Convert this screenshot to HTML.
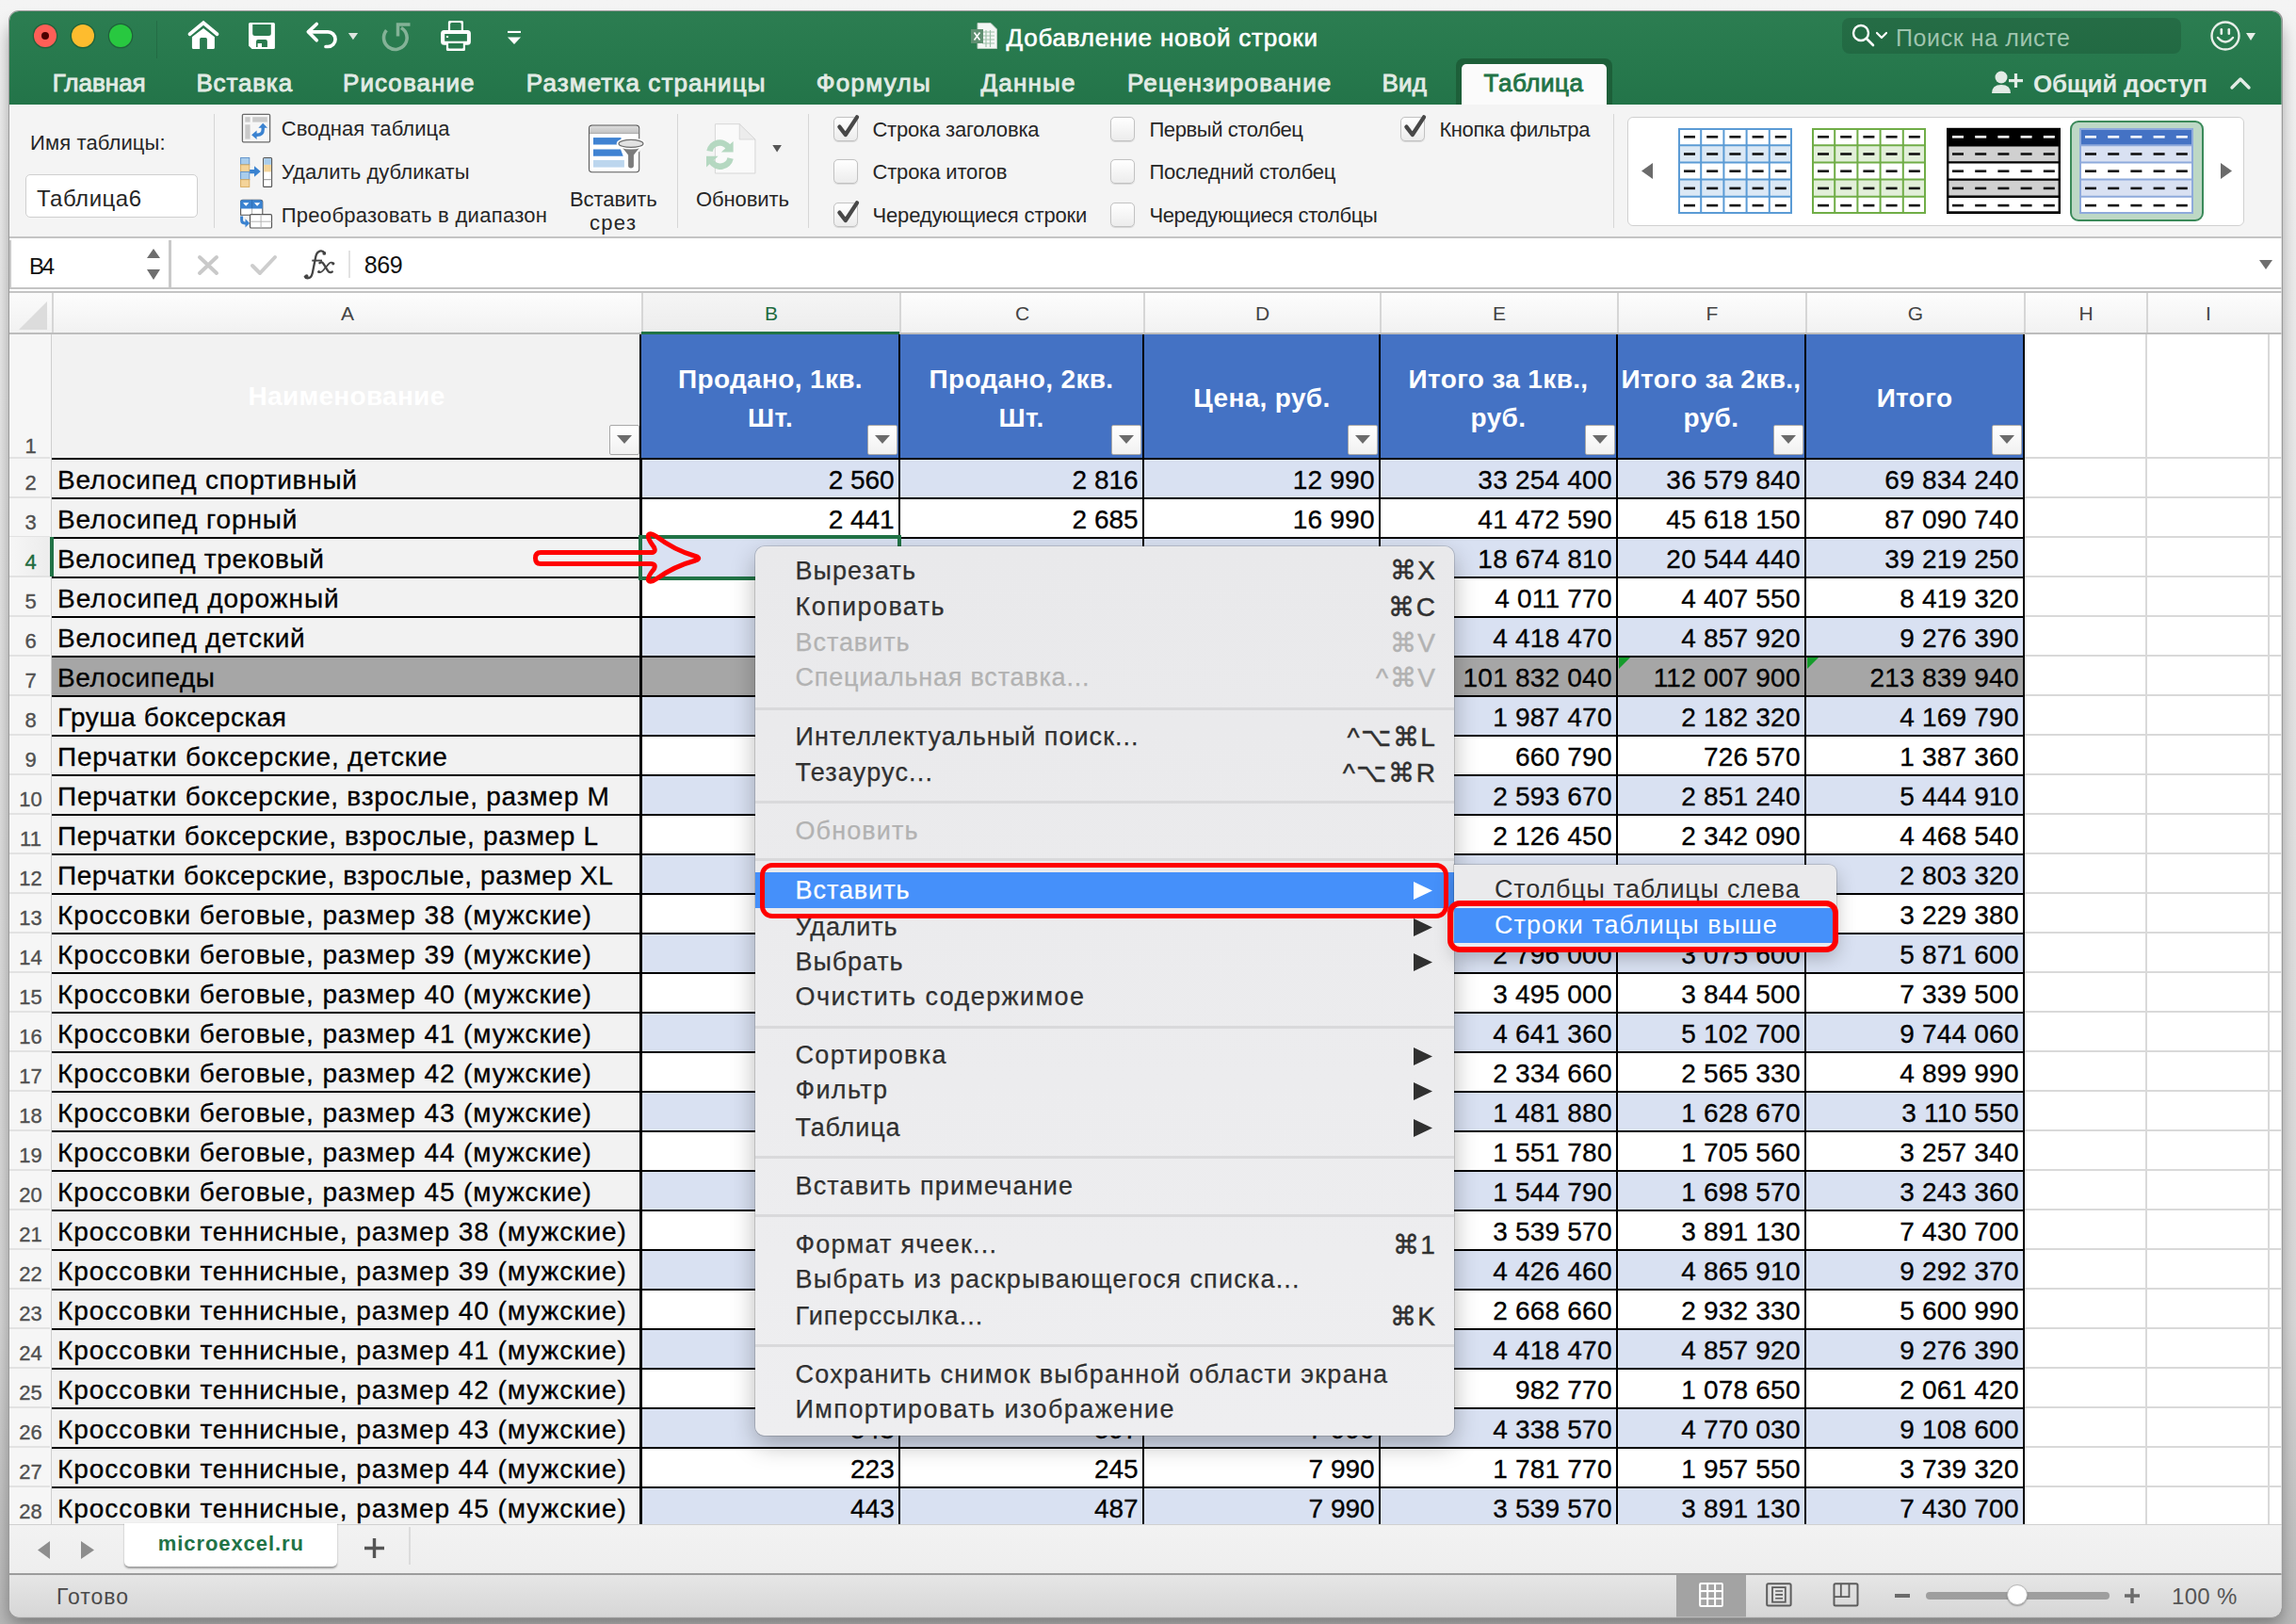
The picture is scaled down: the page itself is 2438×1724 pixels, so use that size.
<!DOCTYPE html><html><head><meta charset='utf-8'><style>
html,body{margin:0;padding:0;}
body{width:2438px;height:1724px;overflow:hidden;position:relative;background:#e4e4e4;font-family:"Liberation Sans",sans-serif;}
.t{position:absolute;white-space:nowrap;}
.b{position:absolute;box-sizing:border-box;}
svg{position:absolute;overflow:visible;}
#win{position:absolute;left:0;top:0;width:2438px;height:1724px;clip-path:inset(12px 15.5px 7.5px 10px round 10px);background:#f1f1f2;}
</style></head><body>

<div class='b' style='left:0;top:0;width:2438px;height:1724px;background:linear-gradient(#f4f4f4 0px,#ececec 300px,#d8d8d8 1400px,#b8b8b8 1724px);'></div>
<div class='b' style='left:10px;top:22px;width:2412px;height:1696px;border-radius:10px;box-shadow:0 6px 18px rgba(0,0,0,0.36);'></div>
<div class='b' style='left:9px;top:11px;width:2414.5px;height:1706.5px;border-radius:11px;background:#9a9a9a;'></div>
<div id='win'>
<div class='b' style='left:10px;top:12px;width:2413px;height:99px;background:linear-gradient(#2c7d51 0px,#287a4e 40px,#237449 99px);'></div>
<div class='b' style='left:36px;top:25.8px;width:24px;height:24px;border-radius:50%;background:#fe5f57;box-shadow:0 0 0 1.3px #1f623b;'></div>
<div class='b' style='left:75.7px;top:25.8px;width:24px;height:24px;border-radius:50%;background:#febc2e;box-shadow:0 0 0 1.3px #1f623b;'></div>
<div class='b' style='left:115.6px;top:25.8px;width:24px;height:24px;border-radius:50%;background:#28c840;box-shadow:0 0 0 1.3px #1f623b;'></div>
<div class='b' style='left:44px;top:33.8px;width:8px;height:8px;border-radius:50%;background:#4d0000;'></div>
<div class='b' style='left:166px;top:22px;width:1px;height:40px;background:rgba(0,0,0,0.12);'></div>
<svg style='left:195px;top:15px' width='105' height='45' viewBox='195 15 105 45'>
<path d='M201.5 36.2 L216 24.3 L230.5 36.2' fill='none' stroke='#ffffff' stroke-width='3.8' stroke-linecap='round' stroke-linejoin='miter'/>
<path d='M216 29.9 L227.9 39.2 V50.5 Q227.9 52 226.4 52 H219.9 V41.4 Q219.9 39.9 218.4 39.9 H213.6 Q212.1 39.9 212.1 41.4 V52 H205.4 Q203.9 52 203.9 50.5 V39.2 Z' fill='#ffffff'/>
<path d='M264 25.4 Q264 23.9 265.5 23.9 H290.4 Q291.9 23.9 291.9 25.4 V50.5 Q291.9 52 290.4 52 H267.5 L264 48.5 Z' fill='#ffffff'/>
<path d='M268.2 26 H287.8 V35.4 Q287.8 37.9 285.3 37.9 H270.7 Q268.2 37.9 268.2 35.4 Z' fill='#2a7b4f'/>
<path d='M272 50 V44 Q272 42 274 42 H281.9 Q283.9 42 283.9 44 V50 H278 V46.1 H273.6 V50 Z' fill='#297a4e'/>
</svg>
<svg style='left:320px;top:15px' width='240' height='45' viewBox='320 15 240 45'>
<path d='M336.2 25.5 L327.3 33.8 L336.2 42.7' fill='none' stroke='#ffffff' stroke-width='3.7' stroke-linecap='round' stroke-linejoin='round'/>
<path d='M328 33.8 H348.2 A7.85 7.85 0 0 1 348.2 49.5 H346' fill='none' stroke='#ffffff' stroke-width='3.7' stroke-linecap='round'/>
<path d='M369.9 35.1 H380.1 L374.9 42.2 Z' fill='#dde6e0'/>
<path d='M410.4 32.2 A12.3 12.3 0 1 0 425.95 29.45' fill='none' stroke='#84b297' stroke-width='3.6'/>
<path d='M435.5 26 H422.5 V38.5' fill='none' stroke='#84b297' stroke-width='3.5'/>
<path d='M475.9 32 V23.5 Q475.9 22 477.4 22 H490.5 Q492 22 492 23.5 V32 H489.8 V25.6 Q489.8 24.1 488.3 24.1 H479.6 Q478.1 24.1 478.1 25.6 V32 Z' fill='#ffffff'/>
<path fill-rule='evenodd' d='M471.6 32 H496.4 Q499.9 32 499.9 35.5 V44.2 Q499.9 47.7 496.4 47.7 H471.6 Q468.1 47.7 468.1 44.2 V35.5 Q468.1 32 471.6 32 Z M472.2 36.1 V43.7 H495.9 V36.1 Z' fill='#ffffff'/>
<rect x='473.9' y='38.1' width='2.2' height='1.9' fill='#ffffff'/>
<path d='M473.9 45.9 H494 V52.5 Q494 54 492.5 54 H475.4 Q473.9 54 473.9 52.5 Z' fill='#ffffff'/>
<path d='M476.1 46.1 H491.8 V50.6 Q491.8 51.6 490.8 51.6 H477.1 Q476.1 51.6 476.1 50.6 Z' fill='#277a4d'/>
<rect x='539' y='32.9' width='14' height='2.1' fill='#ffffff'/>
<path d='M539 39.4 H553 L546 47 Z' fill='#ffffff'/>
</svg>
<svg style='left:1031px;top:24px' width='28' height='28' viewBox='0 0 28 28'>
<path d='M7 0.5 H21 L27.5 7 V27.5 H7 Z' fill='#f4f7f5' stroke='#b9cbbf' stroke-width='1'/>
<path d='M12 10 H25 M12 14 H25 M12 18 H25 M12 22 H25 M16 8 V26 M20.5 8 V26' stroke='#9fc2ab' stroke-width='1.2'/>
<rect x='0' y='7' width='13' height='15' fill='#5f8f71'/>
<path d='M3.5 10.5 L9.5 18.5 M9.5 10.5 L3.5 18.5' stroke='#fff' stroke-width='1.6'/></svg>
<div class='t' style='left:1068.5px;top:27.4px;font-size:26px;line-height:26px;color:#ffffff;letter-spacing:0.806px;-webkit-text-stroke:0.6px #fff;'>Добавление новой строки</div>
<div class='b' style='left:1956px;top:19px;width:360px;height:38px;background:rgba(0,0,0,0.13);border-radius:8px;'></div>
<svg style='left:1966px;top:25px' width='40' height='26' viewBox='0 0 40 26'>
<circle cx='10' cy='10' r='8' fill='none' stroke='#fff' stroke-width='2.4'/>
<path d='M16 16 L23 23' stroke='#fff' stroke-width='2.6' stroke-linecap='round'/>
<path d='M27 10 L32 15 L37 10' fill='none' stroke='#fff' stroke-width='2.2' stroke-linecap='round' stroke-linejoin='round'/></svg>
<div class='t' style='left:2013.0px;top:27.6px;font-size:25px;line-height:25px;color:#9fc4ae;letter-spacing:0.6px;'>Поиск на листе</div>
<svg style='left:2347px;top:22px' width='60' height='34' viewBox='0 0 60 34'>
<circle cx='16' cy='16' r='14.5' fill='none' stroke='#e8efe9' stroke-width='2.4'/>
<rect x='10.5' y='8' width='2.6' height='7' rx='1.3' fill='#e8efe9'/>
<rect x='18.5' y='8' width='2.6' height='7' rx='1.3' fill='#e8efe9'/>
<path d='M8 18 Q16 27 24 18' fill='none' stroke='#e8efe9' stroke-width='2.4' stroke-linecap='round'/>
<path d='M38 13 H48 L43 21 Z' fill='#e8efe9'/></svg>
<div class='t' style='left:55.7px;top:74.9px;font-size:26px;line-height:26px;color:#e2ebe5;letter-spacing:0.008px;-webkit-text-stroke:0.9px #e2ebe5;'>Главная</div>
<div class='t' style='left:208.4px;top:74.9px;font-size:26px;line-height:26px;color:#e2ebe5;letter-spacing:0.846px;-webkit-text-stroke:0.9px #e2ebe5;'>Вставка</div>
<div class='t' style='left:364.0px;top:74.9px;font-size:26px;line-height:26px;color:#e2ebe5;letter-spacing:1.07px;-webkit-text-stroke:0.9px #e2ebe5;'>Рисование</div>
<div class='t' style='left:558.8px;top:74.9px;font-size:26px;line-height:26px;color:#e2ebe5;letter-spacing:1.104px;-webkit-text-stroke:0.9px #e2ebe5;'>Разметка страницы</div>
<div class='t' style='left:866.7px;top:74.9px;font-size:26px;line-height:26px;color:#e2ebe5;letter-spacing:1.312px;-webkit-text-stroke:0.9px #e2ebe5;'>Формулы</div>
<div class='t' style='left:1041.4px;top:74.9px;font-size:26px;line-height:26px;color:#e2ebe5;letter-spacing:1.216px;-webkit-text-stroke:0.9px #e2ebe5;'>Данные</div>
<div class='t' style='left:1196.9px;top:74.9px;font-size:26px;line-height:26px;color:#e2ebe5;letter-spacing:1.205px;-webkit-text-stroke:0.9px #e2ebe5;'>Рецензирование</div>
<div class='t' style='left:1467.4px;top:74.9px;font-size:26px;line-height:26px;color:#e2ebe5;letter-spacing:0.277px;-webkit-text-stroke:0.9px #e2ebe5;'>Вид</div>
<div class='b' style='left:1546px;top:62px;width:166px;height:52px;background:#1d5f39;border-radius:8px 8px 0 0;'></div>
<div class='b' style='left:1552px;top:68px;width:154px;height:46px;background:#fbfbfb;border-radius:5px 5px 0 0;'></div>
<div class='t' style='left:1575.6px;top:74.9px;font-size:26px;line-height:26px;color:#227346;letter-spacing:0.58px;-webkit-text-stroke:0.9px #227346;'>Таблица</div>
<svg style='left:2115px;top:75px' width='36' height='25' viewBox='0 0 36 25'>
<circle cx='10' cy='7' r='6.5' fill='#e2ebe5'/>
<path d='M0 24 Q0 15 10 15 Q20 15 20 24 Z' fill='#e2ebe5'/>
<rect x='18' y='9' width='15' height='3.2' fill='#e2ebe5'/><rect x='23.9' y='3' width='3.2' height='15' fill='#e2ebe5'/></svg>
<div class='t' style='left:2159.0px;top:75.9px;font-size:26px;line-height:26px;color:#e2ebe5;font-weight:700;letter-spacing:-0.22px;'>Общий доступ</div>
<svg style='left:2368px;top:81px' width='22' height='14' viewBox='0 0 22 14'><path d='M2 12 L11 3 L20 12' fill='none' stroke='#e2ebe5' stroke-width='3.4' stroke-linecap='round' stroke-linejoin='round'/></svg>
<div class='b' style='left:10px;top:111px;width:2413px;height:142px;background:#f4f4f4;border-bottom:2px solid #c4c4c4;'></div>
<div class='t' style='left:32.0px;top:140.9px;font-size:22px;line-height:22px;color:#262626;letter-spacing:0.12px;'>Имя таблицы:</div>
<div class='b' style='left:27px;top:185px;width:183px;height:46px;background:#fff;border:1.5px solid #cfcfcf;border-radius:5px;'></div>
<div class='t' style='left:39.0px;top:199.2px;font-size:24px;line-height:24px;color:#262626;letter-spacing:0.509px;'>Таблица6</div>
<div class='b' style='left:226.5px;top:121px;width:1.0px;height:121px;background:#d6d6d6;'></div>
<div class='t' style='left:298.7px;top:126.4px;font-size:22px;line-height:22px;color:#262626;letter-spacing:0.059px;'>Сводная таблица</div>
<div class='t' style='left:298.7px;top:172.4px;font-size:22px;line-height:22px;color:#262626;letter-spacing:0.074px;'>Удалить дубликаты</div>
<div class='t' style='left:298.7px;top:218.0px;font-size:22px;line-height:22px;color:#262626;letter-spacing:0.294px;'>Преобразовать в диапазон</div>
<svg style='left:248px;top:115px' width='50' height='135' viewBox='248 115 50 135'>
<rect x='257.4' y='121.4' width='29.2' height='29.4' rx='1.2' fill='#f6f6f6' stroke='#6a6a6a' stroke-width='1.3'/>
<rect x='260.3' y='124.2' width='5.3' height='5.4' fill='#c9c9c9'/>
<rect x='268.2' y='124.2' width='15.6' height='5.4' fill='#c9c9c9'/>
<rect x='260.3' y='132.3' width='5.3' height='15.3' fill='#c9c9c9'/>
<path d='M271 143.3 H273 Q279.2 143.3 279.2 137.5 V135' fill='none' stroke='#3a82d0' stroke-width='3.4'/>
<path d='M267.1 143.3 L272.6 138.5 V148 Z M279.2 130.8 L274.4 135.8 H284 Z' fill='#3a82d0'/>
<rect x='255.6' y='167.5' width='9.2' height='7.4' fill='#a9cdec' stroke='#5b8fc9' stroke-width='0.9'/>
<rect x='255.6' y='174.9' width='9.2' height='7.5' fill='#f4d49a' stroke='#d6a85a' stroke-width='0.9'/>
<rect x='255.6' y='182.4' width='9.2' height='8.3' fill='#a9cdec' stroke='#5b8fc9' stroke-width='0.9'/>
<rect x='255.6' y='190.7' width='9.2' height='7.7' fill='#f4d49a' stroke='#d6a85a' stroke-width='0.9'/>
<rect x='279.6' y='167.6' width='9' height='30.8' rx='1' fill='#fff' stroke='#555' stroke-width='1.1'/>
<rect x='280.2' y='168.2' width='7.8' height='6.7' fill='#a9cdec'/>
<rect x='280.2' y='174.9' width='7.8' height='7.5' fill='#f4d49a'/>
<path d='M279.6 190.7 H288.6' stroke='#888' stroke-width='0.9'/>
<path d='M265.1 182.1 H271' stroke='#3a82d0' stroke-width='4.2'/>
<path d='M270 176.2 L276.7 182 L270 187.8 Z' fill='#3a82d0'/>
<path d='M255.6 228.2 V214.5 Q255.6 212.2 257.9 212.2 H276.5 Q278.8 212.2 278.8 214.5 V228.2 Z' fill='#fff' stroke='#555' stroke-width='1.1'/>
<path d='M255.1 221.5 V214.5 Q255.1 212.2 257.4 212.2 H276.5 Q278.8 212.2 278.8 214.5 V221.5 Z' fill='#3a82d0'/>
<path d='M267.6 212.2 V221.5' stroke='#2a68b0' stroke-width='0.8'/><path d='M267.6 221.5 V228.2' stroke='#999' stroke-width='0.8'/>
<path d='M258 215.3 H264.4 L261.2 218.8 Z M269.9 215.3 H276.3 L273.1 218.8 Z' fill='#fff'/>
<rect x='265.5' y='227.6' width='23' height='14.4' rx='1.3' fill='#fff' stroke='#555' stroke-width='1.2'/>
<path d='M265.5 235.2 H288.5 M277.1 227.6 V242' stroke='#b5b5b5' stroke-width='1'/>
<path d='M256.6 229.6 V233.5 Q256.6 236.9 260 236.9 H261.5' fill='none' stroke='#3a82d0' stroke-width='3'/>
<path d='M265.1 236.9 L260.5 232.3 V241.5 Z' fill='#3a82d0'/>
</svg>
<svg style='left:600px;top:115px' width='260' height='135' viewBox='600 115 260 135'>
<defs><linearGradient id='slg' x1='0' x2='0' y1='0' y2='1'><stop offset='0' stop-color='#dcdcdc'/><stop offset='1' stop-color='#c2c2c2'/></linearGradient></defs>
<rect x='625.5' y='133.1' width='53.2' height='49.6' rx='3.2' fill='#fff' stroke='#5a5a5a' stroke-width='1.1'/>
<path d='M626.1 141.6 V136.3 Q626.1 133.7 628.7 133.7 H675.5 Q678.1 133.7 678.1 136.3 V141.6 Z' fill='url(#slg)'/>
<path d='M626 141.6 H678.2' stroke='#9a9a9a' stroke-width='0.8'/>
<rect x='630' y='146.1' width='29.5' height='7.4' fill='#3f82d2'/>
<path d='M630 158.6 H659 L661.7 165.7 H630 Z' fill='#3f82d2'/>
<rect x='630' y='169.9' width='32.9' height='7.7' fill='#bcd6ee'/>
<path d='M656 152.4 L666 165 V176 Q666 179.5 670 179.5 Q674 179.5 674 176 V165 L684 152.4 Z' fill='#7b7b7b' stroke='#fff' stroke-width='2.2' stroke-linejoin='round'/>
<ellipse cx='670' cy='152.4' rx='14.2' ry='5' fill='#e6e6e6' stroke='#fff' stroke-width='2.2'/>
<ellipse cx='670' cy='152.4' rx='13' ry='4' fill='#e2e2e2' stroke='#6e6e6e' stroke-width='1.2'/>
</svg>
<div class='t' style='left:605.0px;top:201.4px;font-size:22px;line-height:22px;color:#262626;letter-spacing:-0.067px;'>Вставить</div>
<div class='t' style='left:626.0px;top:225.9px;font-size:22px;line-height:22px;color:#262626;letter-spacing:1.307px;'>срез</div>
<div class='b' style='left:718.5px;top:121px;width:1.0px;height:121px;background:#d6d6d6;'></div>
<svg style='left:740px;top:125px' width='100' height='65' viewBox='740 125 100 65'>
<path d='M759.4 131.7 H785.2 L801.9 148 V184 H759.4 Z' fill='#fafafa' stroke='#d6d6d6' stroke-width='1'/>
<path d='M785.2 131.7 V148 H801.9 Z' fill='#ececec' stroke='#d6d6d6' stroke-width='0.8'/>
<path d='M753.5 160.5 A11 11 0 0 1 773.5 156.5' fill='none' stroke='#b5d8c1' stroke-width='6.5'/>
<path d='M778.6 149.9 V161.6 H765.8 Z' fill='#b5d8c1'/>
<path d='M775.6 168 A11 11 0 0 1 755.5 171.5' fill='none' stroke='#b5d8c1' stroke-width='6.5'/>
<path d='M750 177.5 V165.8 H762.6 Z' fill='#b5d8c1'/>
<path d='M820.3 154.1 H829.9 L825.1 161.4 Z' fill='#555'/>
</svg>
<div class='t' style='left:739.0px;top:201.4px;font-size:22px;line-height:22px;color:#262626;letter-spacing:-0.089px;'>Обновить</div>
<div class='b' style='left:858px;top:121px;width:1px;height:121px;background:#d6d6d6;'></div>
<div class='b' style='left:885px;top:123.6px;width:26px;height:26.0px;background:linear-gradient(#ffffff,#ececec);border:1.3px solid #c2c2c2;border-radius:5px;box-shadow:0 0.8px 0.8px rgba(0,0,0,0.12);'></div>
<svg style='left:886px;top:120.6px' width='28' height='28' viewBox='0 0 28 28'><path d='M5.4 13.6 L11.8 22 L24 3.3' fill='none' stroke='#484848' stroke-width='4.3' stroke-linecap='round' stroke-linejoin='round'/></svg>
<div class='t' style='left:926.4px;top:127.0px;font-size:22px;line-height:22px;color:#262626;letter-spacing:-0.178px;'>Строка заголовка</div>
<div class='b' style='left:885px;top:168.7px;width:26px;height:26.0px;background:linear-gradient(#ffffff,#ececec);border:1.3px solid #c2c2c2;border-radius:5px;box-shadow:0 0.8px 0.8px rgba(0,0,0,0.12);'></div>
<div class='t' style='left:926.4px;top:172.1px;font-size:22px;line-height:22px;color:#262626;letter-spacing:-0.143px;'>Строка итогов</div>
<div class='b' style='left:885px;top:214.5px;width:26px;height:26.0px;background:linear-gradient(#ffffff,#ececec);border:1.3px solid #c2c2c2;border-radius:5px;box-shadow:0 0.8px 0.8px rgba(0,0,0,0.12);'></div>
<svg style='left:886px;top:211.5px' width='28' height='28' viewBox='0 0 28 28'><path d='M5.4 13.6 L11.8 22 L24 3.3' fill='none' stroke='#484848' stroke-width='4.3' stroke-linecap='round' stroke-linejoin='round'/></svg>
<div class='t' style='left:926.4px;top:217.9px;font-size:22px;line-height:22px;color:#262626;letter-spacing:-0.129px;'>Чередующиеся строки</div>
<div class='b' style='left:1179px;top:123.6px;width:26px;height:26.0px;background:linear-gradient(#ffffff,#ececec);border:1.3px solid #c2c2c2;border-radius:5px;box-shadow:0 0.8px 0.8px rgba(0,0,0,0.12);'></div>
<div class='t' style='left:1220.4px;top:127.0px;font-size:22px;line-height:22px;color:#262626;letter-spacing:-0.406px;'>Первый столбец</div>
<div class='b' style='left:1179px;top:168.7px;width:26px;height:26.0px;background:linear-gradient(#ffffff,#ececec);border:1.3px solid #c2c2c2;border-radius:5px;box-shadow:0 0.8px 0.8px rgba(0,0,0,0.12);'></div>
<div class='t' style='left:1220.4px;top:172.1px;font-size:22px;line-height:22px;color:#262626;letter-spacing:-0.246px;'>Последний столбец</div>
<div class='b' style='left:1179px;top:214.5px;width:26px;height:26.0px;background:linear-gradient(#ffffff,#ececec);border:1.3px solid #c2c2c2;border-radius:5px;box-shadow:0 0.8px 0.8px rgba(0,0,0,0.12);'></div>
<div class='t' style='left:1220.4px;top:217.9px;font-size:22px;line-height:22px;color:#262626;letter-spacing:-0.367px;'>Чередующиеся столбцы</div>
<div class='b' style='left:1487px;top:123.6px;width:26px;height:26.0px;background:linear-gradient(#ffffff,#ececec);border:1.3px solid #c2c2c2;border-radius:5px;box-shadow:0 0.8px 0.8px rgba(0,0,0,0.12);'></div>
<svg style='left:1488px;top:120.6px' width='28' height='28' viewBox='0 0 28 28'><path d='M5.4 13.6 L11.8 22 L24 3.3' fill='none' stroke='#484848' stroke-width='4.3' stroke-linecap='round' stroke-linejoin='round'/></svg>
<div class='t' style='left:1528.4px;top:127.0px;font-size:22px;line-height:22px;color:#262626;letter-spacing:-0.392px;'>Кнопка фильтра</div>
<div class='b' style='left:1712.5px;top:121px;width:1.0px;height:121px;background:#d6d6d6;'></div>
<div class='b' style='left:1728px;top:124px;width:655px;height:116px;background:#fff;border:1.5px solid #d0d0d0;border-radius:6px;'></div>
<svg style='left:1743px;top:173px' width='12' height='17' viewBox='0 0 12 17'><path d='M12 0 V17 L0 8.5 Z' fill='#6b6b6b'/></svg>
<svg style='left:2358px;top:173px' width='12' height='17' viewBox='0 0 12 17'><path d='M0 0 V17 L12 8.5 Z' fill='#6b6b6b'/></svg>
<svg style='left:1782px;top:136px' width='121' height='91' viewBox='0 0 121 91'><rect x='0' y='0.0' width='121' height='18.2' fill='#fff'/><rect x='0' y='18.2' width='121' height='18.2' fill='#dbe8f5'/><rect x='0' y='36.4' width='121' height='18.2' fill='#fff'/><rect x='0' y='54.599999999999994' width='121' height='18.2' fill='#dbe8f5'/><rect x='0' y='72.8' width='121' height='18.2' fill='#fff'/><line x1='0' x2='121' y1='1' y2='1' stroke='#5b9bd5' stroke-width='2'/><line x1='0' x2='121' y1='18.2' y2='18.2' stroke='#5b9bd5' stroke-width='2'/><line x1='0' x2='121' y1='36.4' y2='36.4' stroke='#5b9bd5' stroke-width='2'/><line x1='0' x2='121' y1='54.599999999999994' y2='54.599999999999994' stroke='#5b9bd5' stroke-width='2'/><line x1='0' x2='121' y1='72.8' y2='72.8' stroke='#5b9bd5' stroke-width='2'/><line x1='0' x2='121' y1='90' y2='90' stroke='#5b9bd5' stroke-width='2'/><line y1='0' y2='91' x1='1' x2='1' stroke='#5b9bd5' stroke-width='2'/><line y1='0' y2='91' x1='24.2' x2='24.2' stroke='#5b9bd5' stroke-width='2'/><line y1='0' y2='91' x1='48.4' x2='48.4' stroke='#5b9bd5' stroke-width='2'/><line y1='0' y2='91' x1='72.6' x2='72.6' stroke='#5b9bd5' stroke-width='2'/><line y1='0' y2='91' x1='96.8' x2='96.8' stroke='#5b9bd5' stroke-width='2'/><line y1='0' y2='91' x1='120' x2='120' stroke='#5b9bd5' stroke-width='2'/><rect x='6.0' y='8.0' width='12' height='2.6' fill='#111'/><rect x='30.2' y='8.0' width='12' height='2.6' fill='#111'/><rect x='54.4' y='8.0' width='12' height='2.6' fill='#111'/><rect x='78.6' y='8.0' width='12' height='2.6' fill='#111'/><rect x='102.8' y='8.0' width='12' height='2.6' fill='#111'/><rect x='6.0' y='26.2' width='12' height='2.6' fill='#111'/><rect x='30.2' y='26.2' width='12' height='2.6' fill='#111'/><rect x='54.4' y='26.2' width='12' height='2.6' fill='#111'/><rect x='78.6' y='26.2' width='12' height='2.6' fill='#111'/><rect x='102.8' y='26.2' width='12' height='2.6' fill='#111'/><rect x='6.0' y='44.4' width='12' height='2.6' fill='#111'/><rect x='30.2' y='44.4' width='12' height='2.6' fill='#111'/><rect x='54.4' y='44.4' width='12' height='2.6' fill='#111'/><rect x='78.6' y='44.4' width='12' height='2.6' fill='#111'/><rect x='102.8' y='44.4' width='12' height='2.6' fill='#111'/><rect x='6.0' y='62.599999999999994' width='12' height='2.6' fill='#111'/><rect x='30.2' y='62.599999999999994' width='12' height='2.6' fill='#111'/><rect x='54.4' y='62.599999999999994' width='12' height='2.6' fill='#111'/><rect x='78.6' y='62.599999999999994' width='12' height='2.6' fill='#111'/><rect x='102.8' y='62.599999999999994' width='12' height='2.6' fill='#111'/><rect x='6.0' y='80.8' width='12' height='2.6' fill='#111'/><rect x='30.2' y='80.8' width='12' height='2.6' fill='#111'/><rect x='54.4' y='80.8' width='12' height='2.6' fill='#111'/><rect x='78.6' y='80.8' width='12' height='2.6' fill='#111'/><rect x='102.8' y='80.8' width='12' height='2.6' fill='#111'/></svg>
<svg style='left:1924px;top:136px' width='121' height='91' viewBox='0 0 121 91'><rect x='0' y='0.0' width='121' height='18.2' fill='#fff'/><rect x='0' y='18.2' width='121' height='18.2' fill='#e2efd9'/><rect x='0' y='36.4' width='121' height='18.2' fill='#fff'/><rect x='0' y='54.599999999999994' width='121' height='18.2' fill='#e2efd9'/><rect x='0' y='72.8' width='121' height='18.2' fill='#fff'/><line x1='0' x2='121' y1='1' y2='1' stroke='#70ad47' stroke-width='2'/><line x1='0' x2='121' y1='18.2' y2='18.2' stroke='#70ad47' stroke-width='2'/><line x1='0' x2='121' y1='36.4' y2='36.4' stroke='#70ad47' stroke-width='2'/><line x1='0' x2='121' y1='54.599999999999994' y2='54.599999999999994' stroke='#70ad47' stroke-width='2'/><line x1='0' x2='121' y1='72.8' y2='72.8' stroke='#70ad47' stroke-width='2'/><line x1='0' x2='121' y1='90' y2='90' stroke='#70ad47' stroke-width='2'/><line y1='0' y2='91' x1='1' x2='1' stroke='#70ad47' stroke-width='2'/><line y1='0' y2='91' x1='24.2' x2='24.2' stroke='#70ad47' stroke-width='2'/><line y1='0' y2='91' x1='48.4' x2='48.4' stroke='#70ad47' stroke-width='2'/><line y1='0' y2='91' x1='72.6' x2='72.6' stroke='#70ad47' stroke-width='2'/><line y1='0' y2='91' x1='96.8' x2='96.8' stroke='#70ad47' stroke-width='2'/><line y1='0' y2='91' x1='120' x2='120' stroke='#70ad47' stroke-width='2'/><rect x='6.0' y='8.0' width='12' height='2.6' fill='#111'/><rect x='30.2' y='8.0' width='12' height='2.6' fill='#111'/><rect x='54.4' y='8.0' width='12' height='2.6' fill='#111'/><rect x='78.6' y='8.0' width='12' height='2.6' fill='#111'/><rect x='102.8' y='8.0' width='12' height='2.6' fill='#111'/><rect x='6.0' y='26.2' width='12' height='2.6' fill='#111'/><rect x='30.2' y='26.2' width='12' height='2.6' fill='#111'/><rect x='54.4' y='26.2' width='12' height='2.6' fill='#111'/><rect x='78.6' y='26.2' width='12' height='2.6' fill='#111'/><rect x='102.8' y='26.2' width='12' height='2.6' fill='#111'/><rect x='6.0' y='44.4' width='12' height='2.6' fill='#111'/><rect x='30.2' y='44.4' width='12' height='2.6' fill='#111'/><rect x='54.4' y='44.4' width='12' height='2.6' fill='#111'/><rect x='78.6' y='44.4' width='12' height='2.6' fill='#111'/><rect x='102.8' y='44.4' width='12' height='2.6' fill='#111'/><rect x='6.0' y='62.599999999999994' width='12' height='2.6' fill='#111'/><rect x='30.2' y='62.599999999999994' width='12' height='2.6' fill='#111'/><rect x='54.4' y='62.599999999999994' width='12' height='2.6' fill='#111'/><rect x='78.6' y='62.599999999999994' width='12' height='2.6' fill='#111'/><rect x='102.8' y='62.599999999999994' width='12' height='2.6' fill='#111'/><rect x='6.0' y='80.8' width='12' height='2.6' fill='#111'/><rect x='30.2' y='80.8' width='12' height='2.6' fill='#111'/><rect x='54.4' y='80.8' width='12' height='2.6' fill='#111'/><rect x='78.6' y='80.8' width='12' height='2.6' fill='#111'/><rect x='102.8' y='80.8' width='12' height='2.6' fill='#111'/></svg>
<svg style='left:2067px;top:136px' width='121' height='91' viewBox='0 0 121 91'><rect x='0' y='0' width='121' height='18.2' fill='#000'/><rect x='0' y='18.2' width='121' height='18.2' fill='#d0d0d0'/><rect x='0' y='36.4' width='121' height='18.2' fill='#fff'/><rect x='0' y='54.599999999999994' width='121' height='18.2' fill='#d0d0d0'/><rect x='0' y='72.8' width='121' height='18.2' fill='#fff'/><line x1='0' x2='121' y1='18.2' y2='18.2' stroke='#000' stroke-width='2.4'/><line x1='0' x2='121' y1='36.4' y2='36.4' stroke='#000' stroke-width='2.4'/><line x1='0' x2='121' y1='54.599999999999994' y2='54.599999999999994' stroke='#000' stroke-width='2.4'/><line x1='0' x2='121' y1='72.8' y2='72.8' stroke='#000' stroke-width='2.4'/><line x1='0' x2='121' y1='89.8' y2='89.8' stroke='#000' stroke-width='2.4'/><rect x='1.2' y='1' width='118.6' height='88.8' fill='none' stroke='#000' stroke-width='2.4'/><rect x='6.0' y='8.0' width='12' height='2.6' fill='#fff'/><rect x='30.2' y='8.0' width='12' height='2.6' fill='#fff'/><rect x='54.4' y='8.0' width='12' height='2.6' fill='#fff'/><rect x='78.6' y='8.0' width='12' height='2.6' fill='#fff'/><rect x='102.8' y='8.0' width='12' height='2.6' fill='#fff'/><rect x='6.0' y='26.2' width='12' height='2.6' fill='#111'/><rect x='30.2' y='26.2' width='12' height='2.6' fill='#111'/><rect x='54.4' y='26.2' width='12' height='2.6' fill='#111'/><rect x='78.6' y='26.2' width='12' height='2.6' fill='#111'/><rect x='102.8' y='26.2' width='12' height='2.6' fill='#111'/><rect x='6.0' y='44.4' width='12' height='2.6' fill='#111'/><rect x='30.2' y='44.4' width='12' height='2.6' fill='#111'/><rect x='54.4' y='44.4' width='12' height='2.6' fill='#111'/><rect x='78.6' y='44.4' width='12' height='2.6' fill='#111'/><rect x='102.8' y='44.4' width='12' height='2.6' fill='#111'/><rect x='6.0' y='62.599999999999994' width='12' height='2.6' fill='#111'/><rect x='30.2' y='62.599999999999994' width='12' height='2.6' fill='#111'/><rect x='54.4' y='62.599999999999994' width='12' height='2.6' fill='#111'/><rect x='78.6' y='62.599999999999994' width='12' height='2.6' fill='#111'/><rect x='102.8' y='62.599999999999994' width='12' height='2.6' fill='#111'/><rect x='6.0' y='80.8' width='12' height='2.6' fill='#111'/><rect x='30.2' y='80.8' width='12' height='2.6' fill='#111'/><rect x='54.4' y='80.8' width='12' height='2.6' fill='#111'/><rect x='78.6' y='80.8' width='12' height='2.6' fill='#111'/><rect x='102.8' y='80.8' width='12' height='2.6' fill='#111'/></svg>
<div class='b' style='left:2198px;top:128px;width:142px;height:107px;background:#bdd8c5;border:2px solid #3b8a5a;border-radius:9px;'></div>
<svg style='left:2208px;top:136px' width='121' height='91' viewBox='0 0 121 91'><rect x='0' y='0' width='121' height='18.2' fill='#4472c4'/><rect x='0' y='18.2' width='121' height='18.2' fill='#d9e1f2'/><rect x='0' y='36.4' width='121' height='18.2' fill='#fff'/><rect x='0' y='54.599999999999994' width='121' height='18.2' fill='#d9e1f2'/><rect x='0' y='72.8' width='121' height='18.2' fill='#fff'/><line x1='0' x2='121' y1='18.2' y2='18.2' stroke='#8eaadb' stroke-width='2'/><line x1='0' x2='121' y1='36.4' y2='36.4' stroke='#8eaadb' stroke-width='2'/><line x1='0' x2='121' y1='54.599999999999994' y2='54.599999999999994' stroke='#8eaadb' stroke-width='2'/><line x1='0' x2='121' y1='72.8' y2='72.8' stroke='#8eaadb' stroke-width='2'/><rect x='1' y='1' width='119' height='89' fill='none' stroke='#8eaadb' stroke-width='2'/><rect x='6.0' y='8.0' width='12' height='2.6' fill='#fff'/><rect x='30.2' y='8.0' width='12' height='2.6' fill='#fff'/><rect x='54.4' y='8.0' width='12' height='2.6' fill='#fff'/><rect x='78.6' y='8.0' width='12' height='2.6' fill='#fff'/><rect x='102.8' y='8.0' width='12' height='2.6' fill='#fff'/><rect x='6.0' y='26.2' width='12' height='2.6' fill='#111'/><rect x='30.2' y='26.2' width='12' height='2.6' fill='#111'/><rect x='54.4' y='26.2' width='12' height='2.6' fill='#111'/><rect x='78.6' y='26.2' width='12' height='2.6' fill='#111'/><rect x='102.8' y='26.2' width='12' height='2.6' fill='#111'/><rect x='6.0' y='44.4' width='12' height='2.6' fill='#111'/><rect x='30.2' y='44.4' width='12' height='2.6' fill='#111'/><rect x='54.4' y='44.4' width='12' height='2.6' fill='#111'/><rect x='78.6' y='44.4' width='12' height='2.6' fill='#111'/><rect x='102.8' y='44.4' width='12' height='2.6' fill='#111'/><rect x='6.0' y='62.599999999999994' width='12' height='2.6' fill='#111'/><rect x='30.2' y='62.599999999999994' width='12' height='2.6' fill='#111'/><rect x='54.4' y='62.599999999999994' width='12' height='2.6' fill='#111'/><rect x='78.6' y='62.599999999999994' width='12' height='2.6' fill='#111'/><rect x='102.8' y='62.599999999999994' width='12' height='2.6' fill='#111'/><rect x='6.0' y='80.8' width='12' height='2.6' fill='#111'/><rect x='30.2' y='80.8' width='12' height='2.6' fill='#111'/><rect x='54.4' y='80.8' width='12' height='2.6' fill='#111'/><rect x='78.6' y='80.8' width='12' height='2.6' fill='#111'/><rect x='102.8' y='80.8' width='12' height='2.6' fill='#111'/></svg>
<div class='b' style='left:10px;top:253px;width:2413px;height:58px;background:#fff;'></div>
<div class='b' style='left:10px;top:255px;width:171.5px;height:50px;background:#fff;border-left:2px solid #c9c9c9;border-right:3px solid #c9c9c9;'></div>
<div class='t' style='left:31.0px;top:271.2px;font-size:24px;line-height:24px;color:#111;letter-spacing:-2.359px;'>B4</div>
<svg style='left:156px;top:264px' width='15' height='33' viewBox='0 0 15 33'><path d='M0 10 H14 L7 0 Z M0 22 H14 L7 33 Z' fill='#6e6e6e'/></svg>
<svg style='left:209px;top:270px' width='24' height='23' viewBox='0 0 24 23'><path d='M3 3 L21 20 M21 3 L3 20' stroke='#c9c9c9' stroke-width='4' stroke-linecap='round'/></svg>
<svg style='left:265px;top:270px' width='30' height='23' viewBox='0 0 30 23'><path d='M3 12 L11 20 L27 3' fill='none' stroke='#cdcdcd' stroke-width='4' stroke-linecap='round' stroke-linejoin='round'/></svg>
<svg style='left:318px;top:260px' width='42' height='40' viewBox='318 260 42 40'>
<path d='M344.8 268.6 Q342.8 265.8 339.6 266.6 Q336.2 267.6 335.2 272.8 L331.8 289.8 Q330.6 295.4 326.6 295.4 Q324.4 295.4 323.8 293.6' fill='none' stroke='#444' stroke-width='2.3' stroke-linecap='round'/>
<circle cx='344.3' cy='268.9' r='1.9' fill='#444'/><circle cx='325.6' cy='293.2' r='1.9' fill='#444'/>
<path d='M331.2 276.6 H342' stroke='#444' stroke-width='1.9'/>
<path d='M339.4 279.2 Q341.8 277 343.6 280.2 L348.2 287.6 Q349.8 290.2 352.8 288.4' fill='none' stroke='#444' stroke-width='2.3' stroke-linecap='round'/>
<path d='M354 279.6 Q351.4 277.4 348.8 280.4 L343.2 287 Q340.6 290.2 338.4 288.6' fill='none' stroke='#444' stroke-width='1.7' stroke-linecap='round'/>
<circle cx='353.8' cy='279.8' r='1.6' fill='#444'/><circle cx='338.6' cy='288.6' r='1.5' fill='#444'/>
</svg>
<div class='b' style='left:370px;top:266px;width:2px;height:29px;background:#e2e2e2;'></div>
<div class='t' style='left:386.7px;top:269.1px;font-size:25px;line-height:25px;color:#111;letter-spacing:-0.359px;'>869</div>
<svg style='left:2399px;top:276px' width='14' height='10' viewBox='0 0 14 10'><path d='M0 0 H14 L7 10 Z' fill='#6e6e6e'/></svg>
<div class='b' style='left:10px;top:305px;width:2413px;height:2px;background:#c4c4c4;'></div>
<div class='b' style='left:10px;top:309px;width:2413px;height:2px;background:#c4c4c4;'></div>
<div class='b' style='left:10px;top:311px;width:2413px;height:44px;background:linear-gradient(#fdfdfd,#f1f1f1);'></div>
<div class='b' style='left:10px;top:311px;width:45px;height:44px;background:linear-gradient(#fbfbfb,#f1f1f1);'></div>
<svg style='left:20px;top:320px' width='31' height='31' viewBox='0 0 31 31'><path d='M30 0 V30 H0 Z' fill='#dcdcdc'/></svg>
<div class='b' style='left:55px;top:311px;width:626px;height:44px;border-left:2px solid #d6d6d6;'></div>
<div class='t' style='left:-231.0px;width:1200px;text-align:center;top:321.5px;font-size:21px;line-height:21px;color:#444;'>A</div>
<div class='b' style='left:681px;top:311px;width:274px;height:44px;background:linear-gradient(#f5f5f5,#ececec);border-left:2px solid #d6d6d6;'></div>
<div class='t' style='left:219.0px;width:1200px;text-align:center;top:321.5px;font-size:21px;line-height:21px;color:#1e6b3e;'>B</div>
<div class='b' style='left:955px;top:311px;width:259px;height:44px;border-left:2px solid #d6d6d6;'></div>
<div class='t' style='left:485.5px;width:1200px;text-align:center;top:321.5px;font-size:21px;line-height:21px;color:#444;'>C</div>
<div class='b' style='left:1214px;top:311px;width:251px;height:44px;border-left:2px solid #d6d6d6;'></div>
<div class='t' style='left:740.5px;width:1200px;text-align:center;top:321.5px;font-size:21px;line-height:21px;color:#444;'>D</div>
<div class='b' style='left:1465px;top:311px;width:252px;height:44px;border-left:2px solid #d6d6d6;'></div>
<div class='t' style='left:992.0px;width:1200px;text-align:center;top:321.5px;font-size:21px;line-height:21px;color:#444;'>E</div>
<div class='b' style='left:1717px;top:311px;width:200px;height:44px;border-left:2px solid #d6d6d6;'></div>
<div class='t' style='left:1218.0px;width:1200px;text-align:center;top:321.5px;font-size:21px;line-height:21px;color:#444;'>F</div>
<div class='b' style='left:1917px;top:311px;width:232px;height:44px;border-left:2px solid #d6d6d6;'></div>
<div class='t' style='left:1434.0px;width:1200px;text-align:center;top:321.5px;font-size:21px;line-height:21px;color:#444;'>G</div>
<div class='b' style='left:2149px;top:311px;width:130px;height:44px;border-left:2px solid #d6d6d6;'></div>
<div class='t' style='left:1615.0px;width:1200px;text-align:center;top:321.5px;font-size:21px;line-height:21px;color:#444;'>H</div>
<div class='b' style='left:2279px;top:311px;width:130px;height:44px;border-left:2px solid #d6d6d6;'></div>
<div class='t' style='left:1745.0px;width:1200px;text-align:center;top:321.5px;font-size:21px;line-height:21px;color:#444;'>I</div>
<div class='b' style='left:681px;top:352px;width:274px;height:3px;background:#217346;'></div>
<div class='b' style='left:10px;top:353px;width:2413px;height:2px;background:#bdbdbd;'></div>
<div class='b' style='left:681px;top:352px;width:274px;height:3px;background:#217346;'></div>
<div class='b' style='left:10px;top:355px;width:45px;height:1263px;background:#f6f6f6;'></div>
<div class='b' style='left:54px;top:355px;width:2px;height:1263px;background:#cfcfcf;'></div>
<div class='b' style='left:55px;top:355px;width:2368px;height:1263px;background:#fff;'></div>
<div class='b' style='left:10px;top:485px;width:43px;height:2px;background:#e2e2e2;'></div>
<div class='t' style='left:-567.5px;width:1200px;text-align:center;top:463.4px;font-size:22px;line-height:22px;color:#505050;-webkit-text-stroke:0.35px #505050;'>1</div>
<div class='b' style='left:2149px;top:485px;width:274px;height:2px;background:#d9d9d9;'></div>
<div class='b' style='left:10px;top:527px;width:43px;height:2px;background:#e2e2e2;'></div>
<div class='t' style='left:-567.5px;width:1200px;text-align:center;top:501.9px;font-size:22px;line-height:22px;color:#505050;-webkit-text-stroke:0.35px #505050;'>2</div>
<div class='b' style='left:2149px;top:527px;width:274px;height:2px;background:#d9d9d9;'></div>
<div class='b' style='left:10px;top:569px;width:43px;height:2px;background:#e2e2e2;'></div>
<div class='t' style='left:-567.5px;width:1200px;text-align:center;top:543.9px;font-size:22px;line-height:22px;color:#505050;-webkit-text-stroke:0.35px #505050;'>3</div>
<div class='b' style='left:2149px;top:569px;width:274px;height:2px;background:#d9d9d9;'></div>
<div class='b' style='left:10px;top:570px;width:43px;height:42px;background:linear-gradient(90deg,#f6f6f6,#ececec);'></div>
<div class='b' style='left:10px;top:611px;width:43px;height:2px;background:#e2e2e2;'></div>
<div class='t' style='left:-567.5px;width:1200px;text-align:center;top:585.9px;font-size:22px;line-height:22px;color:#1e6b3e;-webkit-text-stroke:0.35px #1e6b3e;'>4</div>
<div class='b' style='left:2149px;top:611px;width:274px;height:2px;background:#d9d9d9;'></div>
<div class='b' style='left:10px;top:653px;width:43px;height:2px;background:#e2e2e2;'></div>
<div class='t' style='left:-567.5px;width:1200px;text-align:center;top:627.9px;font-size:22px;line-height:22px;color:#505050;-webkit-text-stroke:0.35px #505050;'>5</div>
<div class='b' style='left:2149px;top:653px;width:274px;height:2px;background:#d9d9d9;'></div>
<div class='b' style='left:10px;top:695px;width:43px;height:2px;background:#e2e2e2;'></div>
<div class='t' style='left:-567.5px;width:1200px;text-align:center;top:669.9px;font-size:22px;line-height:22px;color:#505050;-webkit-text-stroke:0.35px #505050;'>6</div>
<div class='b' style='left:2149px;top:695px;width:274px;height:2px;background:#d9d9d9;'></div>
<div class='b' style='left:10px;top:737px;width:43px;height:2px;background:#e2e2e2;'></div>
<div class='t' style='left:-567.5px;width:1200px;text-align:center;top:711.9px;font-size:22px;line-height:22px;color:#505050;-webkit-text-stroke:0.35px #505050;'>7</div>
<div class='b' style='left:2149px;top:737px;width:274px;height:2px;background:#d9d9d9;'></div>
<div class='b' style='left:10px;top:779px;width:43px;height:2px;background:#e2e2e2;'></div>
<div class='t' style='left:-567.5px;width:1200px;text-align:center;top:753.9px;font-size:22px;line-height:22px;color:#505050;-webkit-text-stroke:0.35px #505050;'>8</div>
<div class='b' style='left:2149px;top:779px;width:274px;height:2px;background:#d9d9d9;'></div>
<div class='b' style='left:10px;top:821px;width:43px;height:2px;background:#e2e2e2;'></div>
<div class='t' style='left:-567.5px;width:1200px;text-align:center;top:795.9px;font-size:22px;line-height:22px;color:#505050;-webkit-text-stroke:0.35px #505050;'>9</div>
<div class='b' style='left:2149px;top:821px;width:274px;height:2px;background:#d9d9d9;'></div>
<div class='b' style='left:10px;top:863px;width:43px;height:2px;background:#e2e2e2;'></div>
<div class='t' style='left:-567.5px;width:1200px;text-align:center;top:837.9px;font-size:22px;line-height:22px;color:#505050;-webkit-text-stroke:0.35px #505050;'>10</div>
<div class='b' style='left:2149px;top:863px;width:274px;height:2px;background:#d9d9d9;'></div>
<div class='b' style='left:10px;top:905px;width:43px;height:2px;background:#e2e2e2;'></div>
<div class='t' style='left:-567.5px;width:1200px;text-align:center;top:879.9px;font-size:22px;line-height:22px;color:#505050;-webkit-text-stroke:0.35px #505050;'>11</div>
<div class='b' style='left:2149px;top:905px;width:274px;height:2px;background:#d9d9d9;'></div>
<div class='b' style='left:10px;top:947px;width:43px;height:2px;background:#e2e2e2;'></div>
<div class='t' style='left:-567.5px;width:1200px;text-align:center;top:921.9px;font-size:22px;line-height:22px;color:#505050;-webkit-text-stroke:0.35px #505050;'>12</div>
<div class='b' style='left:2149px;top:947px;width:274px;height:2px;background:#d9d9d9;'></div>
<div class='b' style='left:10px;top:989px;width:43px;height:2px;background:#e2e2e2;'></div>
<div class='t' style='left:-567.5px;width:1200px;text-align:center;top:963.9px;font-size:22px;line-height:22px;color:#505050;-webkit-text-stroke:0.35px #505050;'>13</div>
<div class='b' style='left:2149px;top:989px;width:274px;height:2px;background:#d9d9d9;'></div>
<div class='b' style='left:10px;top:1031px;width:43px;height:2px;background:#e2e2e2;'></div>
<div class='t' style='left:-567.5px;width:1200px;text-align:center;top:1005.9px;font-size:22px;line-height:22px;color:#505050;-webkit-text-stroke:0.35px #505050;'>14</div>
<div class='b' style='left:2149px;top:1031px;width:274px;height:2px;background:#d9d9d9;'></div>
<div class='b' style='left:10px;top:1073px;width:43px;height:2px;background:#e2e2e2;'></div>
<div class='t' style='left:-567.5px;width:1200px;text-align:center;top:1047.9px;font-size:22px;line-height:22px;color:#505050;-webkit-text-stroke:0.35px #505050;'>15</div>
<div class='b' style='left:2149px;top:1073px;width:274px;height:2px;background:#d9d9d9;'></div>
<div class='b' style='left:10px;top:1115px;width:43px;height:2px;background:#e2e2e2;'></div>
<div class='t' style='left:-567.5px;width:1200px;text-align:center;top:1089.9px;font-size:22px;line-height:22px;color:#505050;-webkit-text-stroke:0.35px #505050;'>16</div>
<div class='b' style='left:2149px;top:1115px;width:274px;height:2px;background:#d9d9d9;'></div>
<div class='b' style='left:10px;top:1157px;width:43px;height:2px;background:#e2e2e2;'></div>
<div class='t' style='left:-567.5px;width:1200px;text-align:center;top:1131.9px;font-size:22px;line-height:22px;color:#505050;-webkit-text-stroke:0.35px #505050;'>17</div>
<div class='b' style='left:2149px;top:1157px;width:274px;height:2px;background:#d9d9d9;'></div>
<div class='b' style='left:10px;top:1199px;width:43px;height:2px;background:#e2e2e2;'></div>
<div class='t' style='left:-567.5px;width:1200px;text-align:center;top:1173.9px;font-size:22px;line-height:22px;color:#505050;-webkit-text-stroke:0.35px #505050;'>18</div>
<div class='b' style='left:2149px;top:1199px;width:274px;height:2px;background:#d9d9d9;'></div>
<div class='b' style='left:10px;top:1241px;width:43px;height:2px;background:#e2e2e2;'></div>
<div class='t' style='left:-567.5px;width:1200px;text-align:center;top:1215.9px;font-size:22px;line-height:22px;color:#505050;-webkit-text-stroke:0.35px #505050;'>19</div>
<div class='b' style='left:2149px;top:1241px;width:274px;height:2px;background:#d9d9d9;'></div>
<div class='b' style='left:10px;top:1283px;width:43px;height:2px;background:#e2e2e2;'></div>
<div class='t' style='left:-567.5px;width:1200px;text-align:center;top:1257.9px;font-size:22px;line-height:22px;color:#505050;-webkit-text-stroke:0.35px #505050;'>20</div>
<div class='b' style='left:2149px;top:1283px;width:274px;height:2px;background:#d9d9d9;'></div>
<div class='b' style='left:10px;top:1325px;width:43px;height:2px;background:#e2e2e2;'></div>
<div class='t' style='left:-567.5px;width:1200px;text-align:center;top:1299.9px;font-size:22px;line-height:22px;color:#505050;-webkit-text-stroke:0.35px #505050;'>21</div>
<div class='b' style='left:2149px;top:1325px;width:274px;height:2px;background:#d9d9d9;'></div>
<div class='b' style='left:10px;top:1367px;width:43px;height:2px;background:#e2e2e2;'></div>
<div class='t' style='left:-567.5px;width:1200px;text-align:center;top:1341.9px;font-size:22px;line-height:22px;color:#505050;-webkit-text-stroke:0.35px #505050;'>22</div>
<div class='b' style='left:2149px;top:1367px;width:274px;height:2px;background:#d9d9d9;'></div>
<div class='b' style='left:10px;top:1409px;width:43px;height:2px;background:#e2e2e2;'></div>
<div class='t' style='left:-567.5px;width:1200px;text-align:center;top:1383.9px;font-size:22px;line-height:22px;color:#505050;-webkit-text-stroke:0.35px #505050;'>23</div>
<div class='b' style='left:2149px;top:1409px;width:274px;height:2px;background:#d9d9d9;'></div>
<div class='b' style='left:10px;top:1451px;width:43px;height:2px;background:#e2e2e2;'></div>
<div class='t' style='left:-567.5px;width:1200px;text-align:center;top:1425.9px;font-size:22px;line-height:22px;color:#505050;-webkit-text-stroke:0.35px #505050;'>24</div>
<div class='b' style='left:2149px;top:1451px;width:274px;height:2px;background:#d9d9d9;'></div>
<div class='b' style='left:10px;top:1493px;width:43px;height:2px;background:#e2e2e2;'></div>
<div class='t' style='left:-567.5px;width:1200px;text-align:center;top:1467.9px;font-size:22px;line-height:22px;color:#505050;-webkit-text-stroke:0.35px #505050;'>25</div>
<div class='b' style='left:2149px;top:1493px;width:274px;height:2px;background:#d9d9d9;'></div>
<div class='b' style='left:10px;top:1535px;width:43px;height:2px;background:#e2e2e2;'></div>
<div class='t' style='left:-567.5px;width:1200px;text-align:center;top:1509.9px;font-size:22px;line-height:22px;color:#505050;-webkit-text-stroke:0.35px #505050;'>26</div>
<div class='b' style='left:2149px;top:1535px;width:274px;height:2px;background:#d9d9d9;'></div>
<div class='b' style='left:10px;top:1577px;width:43px;height:2px;background:#e2e2e2;'></div>
<div class='t' style='left:-567.5px;width:1200px;text-align:center;top:1551.9px;font-size:22px;line-height:22px;color:#505050;-webkit-text-stroke:0.35px #505050;'>27</div>
<div class='b' style='left:2149px;top:1577px;width:274px;height:2px;background:#d9d9d9;'></div>
<div class='b' style='left:10px;top:1619px;width:43px;height:2px;background:#e2e2e2;'></div>
<div class='t' style='left:-567.5px;width:1200px;text-align:center;top:1593.9px;font-size:22px;line-height:22px;color:#505050;-webkit-text-stroke:0.35px #505050;'>28</div>
<div class='b' style='left:2149px;top:1619px;width:274px;height:2px;background:#d9d9d9;'></div>
<div class='b' style='left:2278px;top:355px;width:2px;height:1263px;background:#d9d9d9;'></div>
<div class='b' style='left:2408px;top:355px;width:2px;height:1263px;background:#d9d9d9;'></div>
<div class='b' style='left:55px;top:355px;width:626px;height:131px;background:#f2f2f2;'></div>
<div class='b' style='left:681px;top:355px;width:1468px;height:131px;background:#4472c4;'></div>
<div class='b' style='left:55px;top:486px;width:626px;height:42px;background:#f2f2f2;'></div>
<div class='b' style='left:681px;top:486px;width:1468px;height:42px;background:#d9e1f2;'></div>
<div class='b' style='left:55px;top:528px;width:626px;height:42px;background:#f2f2f2;'></div>
<div class='b' style='left:681px;top:528px;width:1468px;height:42px;background:#ffffff;'></div>
<div class='b' style='left:55px;top:570px;width:626px;height:42px;background:#f2f2f2;'></div>
<div class='b' style='left:681px;top:570px;width:1468px;height:42px;background:#d9e1f2;'></div>
<div class='b' style='left:55px;top:612px;width:626px;height:42px;background:#f2f2f2;'></div>
<div class='b' style='left:681px;top:612px;width:1468px;height:42px;background:#ffffff;'></div>
<div class='b' style='left:55px;top:654px;width:626px;height:42px;background:#f2f2f2;'></div>
<div class='b' style='left:681px;top:654px;width:1468px;height:42px;background:#d9e1f2;'></div>
<div class='b' style='left:55px;top:696px;width:2094px;height:42px;background:#a6a6a6;'></div>
<div class='b' style='left:55px;top:738px;width:626px;height:42px;background:#f2f2f2;'></div>
<div class='b' style='left:681px;top:738px;width:1468px;height:42px;background:#d9e1f2;'></div>
<div class='b' style='left:55px;top:780px;width:626px;height:42px;background:#f2f2f2;'></div>
<div class='b' style='left:681px;top:780px;width:1468px;height:42px;background:#ffffff;'></div>
<div class='b' style='left:55px;top:822px;width:626px;height:42px;background:#f2f2f2;'></div>
<div class='b' style='left:681px;top:822px;width:1468px;height:42px;background:#d9e1f2;'></div>
<div class='b' style='left:55px;top:864px;width:626px;height:42px;background:#f2f2f2;'></div>
<div class='b' style='left:681px;top:864px;width:1468px;height:42px;background:#ffffff;'></div>
<div class='b' style='left:55px;top:906px;width:626px;height:42px;background:#f2f2f2;'></div>
<div class='b' style='left:681px;top:906px;width:1468px;height:42px;background:#d9e1f2;'></div>
<div class='b' style='left:55px;top:948px;width:626px;height:42px;background:#f2f2f2;'></div>
<div class='b' style='left:681px;top:948px;width:1468px;height:42px;background:#ffffff;'></div>
<div class='b' style='left:55px;top:990px;width:626px;height:42px;background:#f2f2f2;'></div>
<div class='b' style='left:681px;top:990px;width:1468px;height:42px;background:#d9e1f2;'></div>
<div class='b' style='left:55px;top:1032px;width:626px;height:42px;background:#f2f2f2;'></div>
<div class='b' style='left:681px;top:1032px;width:1468px;height:42px;background:#ffffff;'></div>
<div class='b' style='left:55px;top:1074px;width:626px;height:42px;background:#f2f2f2;'></div>
<div class='b' style='left:681px;top:1074px;width:1468px;height:42px;background:#d9e1f2;'></div>
<div class='b' style='left:55px;top:1116px;width:626px;height:42px;background:#f2f2f2;'></div>
<div class='b' style='left:681px;top:1116px;width:1468px;height:42px;background:#ffffff;'></div>
<div class='b' style='left:55px;top:1158px;width:626px;height:42px;background:#f2f2f2;'></div>
<div class='b' style='left:681px;top:1158px;width:1468px;height:42px;background:#d9e1f2;'></div>
<div class='b' style='left:55px;top:1200px;width:626px;height:42px;background:#f2f2f2;'></div>
<div class='b' style='left:681px;top:1200px;width:1468px;height:42px;background:#ffffff;'></div>
<div class='b' style='left:55px;top:1242px;width:626px;height:42px;background:#f2f2f2;'></div>
<div class='b' style='left:681px;top:1242px;width:1468px;height:42px;background:#d9e1f2;'></div>
<div class='b' style='left:55px;top:1284px;width:626px;height:42px;background:#f2f2f2;'></div>
<div class='b' style='left:681px;top:1284px;width:1468px;height:42px;background:#ffffff;'></div>
<div class='b' style='left:55px;top:1326px;width:626px;height:42px;background:#f2f2f2;'></div>
<div class='b' style='left:681px;top:1326px;width:1468px;height:42px;background:#d9e1f2;'></div>
<div class='b' style='left:55px;top:1368px;width:626px;height:42px;background:#f2f2f2;'></div>
<div class='b' style='left:681px;top:1368px;width:1468px;height:42px;background:#ffffff;'></div>
<div class='b' style='left:55px;top:1410px;width:626px;height:42px;background:#f2f2f2;'></div>
<div class='b' style='left:681px;top:1410px;width:1468px;height:42px;background:#d9e1f2;'></div>
<div class='b' style='left:55px;top:1452px;width:626px;height:42px;background:#f2f2f2;'></div>
<div class='b' style='left:681px;top:1452px;width:1468px;height:42px;background:#ffffff;'></div>
<div class='b' style='left:55px;top:1494px;width:626px;height:42px;background:#f2f2f2;'></div>
<div class='b' style='left:681px;top:1494px;width:1468px;height:42px;background:#d9e1f2;'></div>
<div class='b' style='left:55px;top:1536px;width:626px;height:42px;background:#f2f2f2;'></div>
<div class='b' style='left:681px;top:1536px;width:1468px;height:42px;background:#ffffff;'></div>
<div class='b' style='left:55px;top:1578px;width:626px;height:40px;background:#f2f2f2;'></div>
<div class='b' style='left:681px;top:1578px;width:1468px;height:40px;background:#d9e1f2;'></div>
<div class='b' style='left:55px;top:486px;width:2094px;height:2px;background:#000;'></div>
<div class='b' style='left:55px;top:528px;width:2094px;height:2px;background:#000;'></div>
<div class='b' style='left:55px;top:570px;width:2094px;height:2px;background:#000;'></div>
<div class='b' style='left:55px;top:612px;width:2094px;height:2px;background:#000;'></div>
<div class='b' style='left:55px;top:654px;width:2094px;height:2px;background:#000;'></div>
<div class='b' style='left:55px;top:696px;width:2094px;height:2px;background:#000;'></div>
<div class='b' style='left:55px;top:738px;width:2094px;height:2px;background:#000;'></div>
<div class='b' style='left:55px;top:780px;width:2094px;height:2px;background:#000;'></div>
<div class='b' style='left:55px;top:822px;width:2094px;height:2px;background:#000;'></div>
<div class='b' style='left:55px;top:864px;width:2094px;height:2px;background:#000;'></div>
<div class='b' style='left:55px;top:906px;width:2094px;height:2px;background:#000;'></div>
<div class='b' style='left:55px;top:948px;width:2094px;height:2px;background:#000;'></div>
<div class='b' style='left:55px;top:990px;width:2094px;height:2px;background:#000;'></div>
<div class='b' style='left:55px;top:1032px;width:2094px;height:2px;background:#000;'></div>
<div class='b' style='left:55px;top:1074px;width:2094px;height:2px;background:#000;'></div>
<div class='b' style='left:55px;top:1116px;width:2094px;height:2px;background:#000;'></div>
<div class='b' style='left:55px;top:1158px;width:2094px;height:2px;background:#000;'></div>
<div class='b' style='left:55px;top:1200px;width:2094px;height:2px;background:#000;'></div>
<div class='b' style='left:55px;top:1242px;width:2094px;height:2px;background:#000;'></div>
<div class='b' style='left:55px;top:1284px;width:2094px;height:2px;background:#000;'></div>
<div class='b' style='left:55px;top:1326px;width:2094px;height:2px;background:#000;'></div>
<div class='b' style='left:55px;top:1368px;width:2094px;height:2px;background:#000;'></div>
<div class='b' style='left:55px;top:1410px;width:2094px;height:2px;background:#000;'></div>
<div class='b' style='left:55px;top:1452px;width:2094px;height:2px;background:#000;'></div>
<div class='b' style='left:55px;top:1494px;width:2094px;height:2px;background:#000;'></div>
<div class='b' style='left:55px;top:1536px;width:2094px;height:2px;background:#000;'></div>
<div class='b' style='left:55px;top:1578px;width:2094px;height:2px;background:#000;'></div>
<div class='b' style='left:680px;top:486px;width:2px;height:1132px;background:#000;'></div>
<div class='b' style='left:954px;top:355px;width:2px;height:1263px;background:#000;'></div>
<div class='b' style='left:1213px;top:355px;width:2px;height:1263px;background:#000;'></div>
<div class='b' style='left:1464px;top:355px;width:2px;height:1263px;background:#000;'></div>
<div class='b' style='left:1716px;top:355px;width:2px;height:1263px;background:#000;'></div>
<div class='b' style='left:1916px;top:355px;width:2px;height:1263px;background:#000;'></div>
<div class='b' style='left:2148px;top:355px;width:2px;height:1263px;background:#000;'></div>
<div class='b' style='left:679px;top:355px;width:2px;height:1263px;background:#000;'></div>
<div class='t' style='left:-232.0px;width:1200px;text-align:center;top:407.2px;font-size:28px;line-height:28px;color:#ffffff;font-weight:700;letter-spacing:0.3px;'>Наименование</div>
<div class='t' style='left:218.0px;width:1200px;text-align:center;top:388.7px;font-size:28px;line-height:28px;color:#ffffff;font-weight:700;letter-spacing:0.35px;'>Продано, 1кв.</div>
<div class='t' style='left:218.0px;width:1200px;text-align:center;top:429.7px;font-size:28px;line-height:28px;color:#ffffff;font-weight:700;letter-spacing:0.35px;'>Шт.</div>
<div class='t' style='left:484.5px;width:1200px;text-align:center;top:388.7px;font-size:28px;line-height:28px;color:#ffffff;font-weight:700;letter-spacing:0.35px;'>Продано, 2кв.</div>
<div class='t' style='left:484.5px;width:1200px;text-align:center;top:429.7px;font-size:28px;line-height:28px;color:#ffffff;font-weight:700;letter-spacing:0.35px;'>Шт.</div>
<div class='t' style='left:740.0px;width:1200px;text-align:center;top:408.7px;font-size:28px;line-height:28px;color:#ffffff;font-weight:700;letter-spacing:0.35px;'>Цена, руб.</div>
<div class='t' style='left:991.0px;width:1200px;text-align:center;top:388.7px;font-size:28px;line-height:28px;color:#ffffff;font-weight:700;letter-spacing:0.35px;'>Итого за 1кв.,</div>
<div class='t' style='left:991.0px;width:1200px;text-align:center;top:429.7px;font-size:28px;line-height:28px;color:#ffffff;font-weight:700;letter-spacing:0.35px;'>руб.</div>
<div class='t' style='left:1217.0px;width:1200px;text-align:center;top:388.7px;font-size:28px;line-height:28px;color:#ffffff;font-weight:700;letter-spacing:0.35px;'>Итого за 2кв.,</div>
<div class='t' style='left:1217.0px;width:1200px;text-align:center;top:429.7px;font-size:28px;line-height:28px;color:#ffffff;font-weight:700;letter-spacing:0.35px;'>руб.</div>
<div class='t' style='left:1433.0px;width:1200px;text-align:center;top:408.7px;font-size:28px;line-height:28px;color:#ffffff;font-weight:700;letter-spacing:0.35px;'>Итого</div>
<div class='b' style='left:647px;top:451px;width:32px;height:32px;background:linear-gradient(#ffffff,#f1f1f1);border:1.5px solid #a8a8a8;border-radius:2px;'></div>
<svg style='left:655px;top:462px' width='16' height='10' viewBox='0 0 16 10'><path d='M0 0 H16 L8 9 Z' fill='#6b6b6b'/></svg>
<div class='b' style='left:921px;top:451px;width:32px;height:32px;background:linear-gradient(#ffffff,#f1f1f1);border:1.5px solid #a8a8a8;border-radius:2px;'></div>
<svg style='left:929px;top:462px' width='16' height='10' viewBox='0 0 16 10'><path d='M0 0 H16 L8 9 Z' fill='#6b6b6b'/></svg>
<div class='b' style='left:1180px;top:451px;width:32px;height:32px;background:linear-gradient(#ffffff,#f1f1f1);border:1.5px solid #a8a8a8;border-radius:2px;'></div>
<svg style='left:1188px;top:462px' width='16' height='10' viewBox='0 0 16 10'><path d='M0 0 H16 L8 9 Z' fill='#6b6b6b'/></svg>
<div class='b' style='left:1431px;top:451px;width:32px;height:32px;background:linear-gradient(#ffffff,#f1f1f1);border:1.5px solid #a8a8a8;border-radius:2px;'></div>
<svg style='left:1439px;top:462px' width='16' height='10' viewBox='0 0 16 10'><path d='M0 0 H16 L8 9 Z' fill='#6b6b6b'/></svg>
<div class='b' style='left:1683px;top:451px;width:32px;height:32px;background:linear-gradient(#ffffff,#f1f1f1);border:1.5px solid #a8a8a8;border-radius:2px;'></div>
<svg style='left:1691px;top:462px' width='16' height='10' viewBox='0 0 16 10'><path d='M0 0 H16 L8 9 Z' fill='#6b6b6b'/></svg>
<div class='b' style='left:1883px;top:451px;width:32px;height:32px;background:linear-gradient(#ffffff,#f1f1f1);border:1.5px solid #a8a8a8;border-radius:2px;'></div>
<svg style='left:1891px;top:462px' width='16' height='10' viewBox='0 0 16 10'><path d='M0 0 H16 L8 9 Z' fill='#6b6b6b'/></svg>
<div class='b' style='left:2115px;top:451px;width:32px;height:32px;background:linear-gradient(#ffffff,#f1f1f1);border:1.5px solid #a8a8a8;border-radius:2px;'></div>
<svg style='left:2123px;top:462px' width='16' height='10' viewBox='0 0 16 10'><path d='M0 0 H16 L8 9 Z' fill='#6b6b6b'/></svg>
<div class='t' style='left:61.0px;top:495.7px;font-size:28px;line-height:28px;color:#000;letter-spacing:0.751px;-webkit-text-stroke:0.3px #000;'>Велосипед спортивный</div>
<div class='t' style='left:-250.3px;width:1200px;text-align:right;top:495.7px;font-size:28px;line-height:28px;color:#000;-webkit-text-stroke:0.3px #000;'>2 560</div>
<div class='t' style='left:8.7px;width:1200px;text-align:right;top:495.7px;font-size:28px;line-height:28px;color:#000;-webkit-text-stroke:0.3px #000;'>2 816</div>
<div class='t' style='left:259.7px;width:1200px;text-align:right;top:495.7px;font-size:28px;line-height:28px;color:#000;letter-spacing:0.22px;-webkit-text-stroke:0.3px #000;'>12 990</div>
<div class='t' style='left:511.7px;width:1200px;text-align:right;top:495.7px;font-size:28px;line-height:28px;color:#000;letter-spacing:0.22px;-webkit-text-stroke:0.3px #000;'>33 254 400</div>
<div class='t' style='left:711.7px;width:1200px;text-align:right;top:495.7px;font-size:28px;line-height:28px;color:#000;letter-spacing:0.22px;-webkit-text-stroke:0.3px #000;'>36 579 840</div>
<div class='t' style='left:943.7px;width:1200px;text-align:right;top:495.7px;font-size:28px;line-height:28px;color:#000;letter-spacing:0.22px;-webkit-text-stroke:0.3px #000;'>69 834 240</div>
<div class='t' style='left:61.0px;top:537.7px;font-size:28px;line-height:28px;color:#000;letter-spacing:0.87px;-webkit-text-stroke:0.3px #000;'>Велосипед горный</div>
<div class='t' style='left:-250.3px;width:1200px;text-align:right;top:537.7px;font-size:28px;line-height:28px;color:#000;-webkit-text-stroke:0.3px #000;'>2 441</div>
<div class='t' style='left:8.7px;width:1200px;text-align:right;top:537.7px;font-size:28px;line-height:28px;color:#000;-webkit-text-stroke:0.3px #000;'>2 685</div>
<div class='t' style='left:259.7px;width:1200px;text-align:right;top:537.7px;font-size:28px;line-height:28px;color:#000;letter-spacing:0.22px;-webkit-text-stroke:0.3px #000;'>16 990</div>
<div class='t' style='left:511.7px;width:1200px;text-align:right;top:537.7px;font-size:28px;line-height:28px;color:#000;letter-spacing:0.22px;-webkit-text-stroke:0.3px #000;'>41 472 590</div>
<div class='t' style='left:711.7px;width:1200px;text-align:right;top:537.7px;font-size:28px;line-height:28px;color:#000;letter-spacing:0.22px;-webkit-text-stroke:0.3px #000;'>45 618 150</div>
<div class='t' style='left:943.7px;width:1200px;text-align:right;top:537.7px;font-size:28px;line-height:28px;color:#000;letter-spacing:0.22px;-webkit-text-stroke:0.3px #000;'>87 090 740</div>
<div class='t' style='left:61.0px;top:579.7px;font-size:28px;line-height:28px;color:#000;letter-spacing:0.634px;-webkit-text-stroke:0.3px #000;'>Велосипед трековый</div>
<div class='t' style='left:511.7px;width:1200px;text-align:right;top:579.7px;font-size:28px;line-height:28px;color:#000;letter-spacing:0.22px;-webkit-text-stroke:0.3px #000;'>18 674 810</div>
<div class='t' style='left:711.7px;width:1200px;text-align:right;top:579.7px;font-size:28px;line-height:28px;color:#000;letter-spacing:0.22px;-webkit-text-stroke:0.3px #000;'>20 544 440</div>
<div class='t' style='left:943.7px;width:1200px;text-align:right;top:579.7px;font-size:28px;line-height:28px;color:#000;letter-spacing:0.22px;-webkit-text-stroke:0.3px #000;'>39 219 250</div>
<div class='t' style='left:61.0px;top:621.7px;font-size:28px;line-height:28px;color:#000;letter-spacing:0.977px;-webkit-text-stroke:0.3px #000;'>Велосипед дорожный</div>
<div class='t' style='left:511.7px;width:1200px;text-align:right;top:621.7px;font-size:28px;line-height:28px;color:#000;letter-spacing:0.22px;-webkit-text-stroke:0.3px #000;'>4 011 770</div>
<div class='t' style='left:711.7px;width:1200px;text-align:right;top:621.7px;font-size:28px;line-height:28px;color:#000;letter-spacing:0.22px;-webkit-text-stroke:0.3px #000;'>4 407 550</div>
<div class='t' style='left:943.7px;width:1200px;text-align:right;top:621.7px;font-size:28px;line-height:28px;color:#000;letter-spacing:0.22px;-webkit-text-stroke:0.3px #000;'>8 419 320</div>
<div class='t' style='left:61.0px;top:663.7px;font-size:28px;line-height:28px;color:#000;letter-spacing:0.769px;-webkit-text-stroke:0.3px #000;'>Велосипед детский</div>
<div class='t' style='left:511.7px;width:1200px;text-align:right;top:663.7px;font-size:28px;line-height:28px;color:#000;letter-spacing:0.22px;-webkit-text-stroke:0.3px #000;'>4 418 470</div>
<div class='t' style='left:711.7px;width:1200px;text-align:right;top:663.7px;font-size:28px;line-height:28px;color:#000;letter-spacing:0.22px;-webkit-text-stroke:0.3px #000;'>4 857 920</div>
<div class='t' style='left:943.7px;width:1200px;text-align:right;top:663.7px;font-size:28px;line-height:28px;color:#000;letter-spacing:0.22px;-webkit-text-stroke:0.3px #000;'>9 276 390</div>
<div class='t' style='left:61.0px;top:705.7px;font-size:28px;line-height:28px;color:#000;letter-spacing:0.578px;-webkit-text-stroke:0.3px #000;'>Велосипеды</div>
<div class='t' style='left:511.7px;width:1200px;text-align:right;top:705.7px;font-size:28px;line-height:28px;color:#000;letter-spacing:0.22px;-webkit-text-stroke:0.3px #000;'>101 832 040</div>
<div class='t' style='left:711.7px;width:1200px;text-align:right;top:705.7px;font-size:28px;line-height:28px;color:#000;letter-spacing:0.22px;-webkit-text-stroke:0.3px #000;'>112 007 900</div>
<div class='t' style='left:943.7px;width:1200px;text-align:right;top:705.7px;font-size:28px;line-height:28px;color:#000;letter-spacing:0.22px;-webkit-text-stroke:0.3px #000;'>213 839 940</div>
<div class='t' style='left:61.0px;top:747.7px;font-size:28px;line-height:28px;color:#000;letter-spacing:0.494px;-webkit-text-stroke:0.3px #000;'>Груша боксерская</div>
<div class='t' style='left:511.7px;width:1200px;text-align:right;top:747.7px;font-size:28px;line-height:28px;color:#000;letter-spacing:0.22px;-webkit-text-stroke:0.3px #000;'>1 987 470</div>
<div class='t' style='left:711.7px;width:1200px;text-align:right;top:747.7px;font-size:28px;line-height:28px;color:#000;letter-spacing:0.22px;-webkit-text-stroke:0.3px #000;'>2 182 320</div>
<div class='t' style='left:943.7px;width:1200px;text-align:right;top:747.7px;font-size:28px;line-height:28px;color:#000;letter-spacing:0.22px;-webkit-text-stroke:0.3px #000;'>4 169 790</div>
<div class='t' style='left:61.0px;top:789.7px;font-size:28px;line-height:28px;color:#000;letter-spacing:0.812px;-webkit-text-stroke:0.3px #000;'>Перчатки боксерские, детские</div>
<div class='t' style='left:511.7px;width:1200px;text-align:right;top:789.7px;font-size:28px;line-height:28px;color:#000;letter-spacing:0.22px;-webkit-text-stroke:0.3px #000;'>660 790</div>
<div class='t' style='left:711.7px;width:1200px;text-align:right;top:789.7px;font-size:28px;line-height:28px;color:#000;letter-spacing:0.22px;-webkit-text-stroke:0.3px #000;'>726 570</div>
<div class='t' style='left:943.7px;width:1200px;text-align:right;top:789.7px;font-size:28px;line-height:28px;color:#000;letter-spacing:0.22px;-webkit-text-stroke:0.3px #000;'>1 387 360</div>
<div class='t' style='left:61.0px;top:831.7px;font-size:28px;line-height:28px;color:#000;letter-spacing:0.777px;-webkit-text-stroke:0.3px #000;'>Перчатки боксерские, взрослые, размер M</div>
<div class='t' style='left:511.7px;width:1200px;text-align:right;top:831.7px;font-size:28px;line-height:28px;color:#000;letter-spacing:0.22px;-webkit-text-stroke:0.3px #000;'>2 593 670</div>
<div class='t' style='left:711.7px;width:1200px;text-align:right;top:831.7px;font-size:28px;line-height:28px;color:#000;letter-spacing:0.22px;-webkit-text-stroke:0.3px #000;'>2 851 240</div>
<div class='t' style='left:943.7px;width:1200px;text-align:right;top:831.7px;font-size:28px;line-height:28px;color:#000;letter-spacing:0.22px;-webkit-text-stroke:0.3px #000;'>5 444 910</div>
<div class='t' style='left:61.0px;top:873.7px;font-size:28px;line-height:28px;color:#000;letter-spacing:0.671px;-webkit-text-stroke:0.3px #000;'>Перчатки боксерские, взрослые, размер L</div>
<div class='t' style='left:511.7px;width:1200px;text-align:right;top:873.7px;font-size:28px;line-height:28px;color:#000;letter-spacing:0.22px;-webkit-text-stroke:0.3px #000;'>2 126 450</div>
<div class='t' style='left:711.7px;width:1200px;text-align:right;top:873.7px;font-size:28px;line-height:28px;color:#000;letter-spacing:0.22px;-webkit-text-stroke:0.3px #000;'>2 342 090</div>
<div class='t' style='left:943.7px;width:1200px;text-align:right;top:873.7px;font-size:28px;line-height:28px;color:#000;letter-spacing:0.22px;-webkit-text-stroke:0.3px #000;'>4 468 540</div>
<div class='t' style='left:61.0px;top:915.7px;font-size:28px;line-height:28px;color:#000;letter-spacing:0.577px;-webkit-text-stroke:0.3px #000;'>Перчатки боксерские, взрослые, размер XL</div>
<div class='t' style='left:943.7px;width:1200px;text-align:right;top:915.7px;font-size:28px;line-height:28px;color:#000;letter-spacing:0.22px;-webkit-text-stroke:0.3px #000;'>2 803 320</div>
<div class='t' style='left:61.0px;top:957.7px;font-size:28px;line-height:28px;color:#000;letter-spacing:0.89px;-webkit-text-stroke:0.3px #000;'>Кроссовки беговые, размер 38 (мужские)</div>
<div class='t' style='left:943.7px;width:1200px;text-align:right;top:957.7px;font-size:28px;line-height:28px;color:#000;letter-spacing:0.22px;-webkit-text-stroke:0.3px #000;'>3 229 380</div>
<div class='t' style='left:61.0px;top:999.7px;font-size:28px;line-height:28px;color:#000;letter-spacing:0.89px;-webkit-text-stroke:0.3px #000;'>Кроссовки беговые, размер 39 (мужские)</div>
<div class='t' style='left:511.7px;width:1200px;text-align:right;top:999.7px;font-size:28px;line-height:28px;color:#000;letter-spacing:0.22px;-webkit-text-stroke:0.3px #000;'>2 796 000</div>
<div class='t' style='left:711.7px;width:1200px;text-align:right;top:999.7px;font-size:28px;line-height:28px;color:#000;letter-spacing:0.22px;-webkit-text-stroke:0.3px #000;'>3 075 600</div>
<div class='t' style='left:943.7px;width:1200px;text-align:right;top:999.7px;font-size:28px;line-height:28px;color:#000;letter-spacing:0.22px;-webkit-text-stroke:0.3px #000;'>5 871 600</div>
<div class='t' style='left:61.0px;top:1041.7px;font-size:28px;line-height:28px;color:#000;letter-spacing:0.89px;-webkit-text-stroke:0.3px #000;'>Кроссовки беговые, размер 40 (мужские)</div>
<div class='t' style='left:511.7px;width:1200px;text-align:right;top:1041.7px;font-size:28px;line-height:28px;color:#000;letter-spacing:0.22px;-webkit-text-stroke:0.3px #000;'>3 495 000</div>
<div class='t' style='left:711.7px;width:1200px;text-align:right;top:1041.7px;font-size:28px;line-height:28px;color:#000;letter-spacing:0.22px;-webkit-text-stroke:0.3px #000;'>3 844 500</div>
<div class='t' style='left:943.7px;width:1200px;text-align:right;top:1041.7px;font-size:28px;line-height:28px;color:#000;letter-spacing:0.22px;-webkit-text-stroke:0.3px #000;'>7 339 500</div>
<div class='t' style='left:61.0px;top:1083.7px;font-size:28px;line-height:28px;color:#000;letter-spacing:0.89px;-webkit-text-stroke:0.3px #000;'>Кроссовки беговые, размер 41 (мужские)</div>
<div class='t' style='left:511.7px;width:1200px;text-align:right;top:1083.7px;font-size:28px;line-height:28px;color:#000;letter-spacing:0.22px;-webkit-text-stroke:0.3px #000;'>4 641 360</div>
<div class='t' style='left:711.7px;width:1200px;text-align:right;top:1083.7px;font-size:28px;line-height:28px;color:#000;letter-spacing:0.22px;-webkit-text-stroke:0.3px #000;'>5 102 700</div>
<div class='t' style='left:943.7px;width:1200px;text-align:right;top:1083.7px;font-size:28px;line-height:28px;color:#000;letter-spacing:0.22px;-webkit-text-stroke:0.3px #000;'>9 744 060</div>
<div class='t' style='left:61.0px;top:1125.7px;font-size:28px;line-height:28px;color:#000;letter-spacing:0.89px;-webkit-text-stroke:0.3px #000;'>Кроссовки беговые, размер 42 (мужские)</div>
<div class='t' style='left:511.7px;width:1200px;text-align:right;top:1125.7px;font-size:28px;line-height:28px;color:#000;letter-spacing:0.22px;-webkit-text-stroke:0.3px #000;'>2 334 660</div>
<div class='t' style='left:711.7px;width:1200px;text-align:right;top:1125.7px;font-size:28px;line-height:28px;color:#000;letter-spacing:0.22px;-webkit-text-stroke:0.3px #000;'>2 565 330</div>
<div class='t' style='left:943.7px;width:1200px;text-align:right;top:1125.7px;font-size:28px;line-height:28px;color:#000;letter-spacing:0.22px;-webkit-text-stroke:0.3px #000;'>4 899 990</div>
<div class='t' style='left:61.0px;top:1167.7px;font-size:28px;line-height:28px;color:#000;letter-spacing:0.89px;-webkit-text-stroke:0.3px #000;'>Кроссовки беговые, размер 43 (мужские)</div>
<div class='t' style='left:511.7px;width:1200px;text-align:right;top:1167.7px;font-size:28px;line-height:28px;color:#000;letter-spacing:0.22px;-webkit-text-stroke:0.3px #000;'>1 481 880</div>
<div class='t' style='left:711.7px;width:1200px;text-align:right;top:1167.7px;font-size:28px;line-height:28px;color:#000;letter-spacing:0.22px;-webkit-text-stroke:0.3px #000;'>1 628 670</div>
<div class='t' style='left:943.7px;width:1200px;text-align:right;top:1167.7px;font-size:28px;line-height:28px;color:#000;letter-spacing:0.22px;-webkit-text-stroke:0.3px #000;'>3 110 550</div>
<div class='t' style='left:61.0px;top:1209.7px;font-size:28px;line-height:28px;color:#000;letter-spacing:0.89px;-webkit-text-stroke:0.3px #000;'>Кроссовки беговые, размер 44 (мужские)</div>
<div class='t' style='left:511.7px;width:1200px;text-align:right;top:1209.7px;font-size:28px;line-height:28px;color:#000;letter-spacing:0.22px;-webkit-text-stroke:0.3px #000;'>1 551 780</div>
<div class='t' style='left:711.7px;width:1200px;text-align:right;top:1209.7px;font-size:28px;line-height:28px;color:#000;letter-spacing:0.22px;-webkit-text-stroke:0.3px #000;'>1 705 560</div>
<div class='t' style='left:943.7px;width:1200px;text-align:right;top:1209.7px;font-size:28px;line-height:28px;color:#000;letter-spacing:0.22px;-webkit-text-stroke:0.3px #000;'>3 257 340</div>
<div class='t' style='left:61.0px;top:1251.7px;font-size:28px;line-height:28px;color:#000;letter-spacing:0.89px;-webkit-text-stroke:0.3px #000;'>Кроссовки беговые, размер 45 (мужские)</div>
<div class='t' style='left:511.7px;width:1200px;text-align:right;top:1251.7px;font-size:28px;line-height:28px;color:#000;letter-spacing:0.22px;-webkit-text-stroke:0.3px #000;'>1 544 790</div>
<div class='t' style='left:711.7px;width:1200px;text-align:right;top:1251.7px;font-size:28px;line-height:28px;color:#000;letter-spacing:0.22px;-webkit-text-stroke:0.3px #000;'>1 698 570</div>
<div class='t' style='left:943.7px;width:1200px;text-align:right;top:1251.7px;font-size:28px;line-height:28px;color:#000;letter-spacing:0.22px;-webkit-text-stroke:0.3px #000;'>3 243 360</div>
<div class='t' style='left:61.0px;top:1293.7px;font-size:28px;line-height:28px;color:#000;letter-spacing:0.952px;-webkit-text-stroke:0.3px #000;'>Кроссовки теннисные, размер 38 (мужские)</div>
<div class='t' style='left:511.7px;width:1200px;text-align:right;top:1293.7px;font-size:28px;line-height:28px;color:#000;letter-spacing:0.22px;-webkit-text-stroke:0.3px #000;'>3 539 570</div>
<div class='t' style='left:711.7px;width:1200px;text-align:right;top:1293.7px;font-size:28px;line-height:28px;color:#000;letter-spacing:0.22px;-webkit-text-stroke:0.3px #000;'>3 891 130</div>
<div class='t' style='left:943.7px;width:1200px;text-align:right;top:1293.7px;font-size:28px;line-height:28px;color:#000;letter-spacing:0.22px;-webkit-text-stroke:0.3px #000;'>7 430 700</div>
<div class='t' style='left:61.0px;top:1335.7px;font-size:28px;line-height:28px;color:#000;letter-spacing:0.952px;-webkit-text-stroke:0.3px #000;'>Кроссовки теннисные, размер 39 (мужские)</div>
<div class='t' style='left:511.7px;width:1200px;text-align:right;top:1335.7px;font-size:28px;line-height:28px;color:#000;letter-spacing:0.22px;-webkit-text-stroke:0.3px #000;'>4 426 460</div>
<div class='t' style='left:711.7px;width:1200px;text-align:right;top:1335.7px;font-size:28px;line-height:28px;color:#000;letter-spacing:0.22px;-webkit-text-stroke:0.3px #000;'>4 865 910</div>
<div class='t' style='left:943.7px;width:1200px;text-align:right;top:1335.7px;font-size:28px;line-height:28px;color:#000;letter-spacing:0.22px;-webkit-text-stroke:0.3px #000;'>9 292 370</div>
<div class='t' style='left:61.0px;top:1377.7px;font-size:28px;line-height:28px;color:#000;letter-spacing:0.952px;-webkit-text-stroke:0.3px #000;'>Кроссовки теннисные, размер 40 (мужские)</div>
<div class='t' style='left:511.7px;width:1200px;text-align:right;top:1377.7px;font-size:28px;line-height:28px;color:#000;letter-spacing:0.22px;-webkit-text-stroke:0.3px #000;'>2 668 660</div>
<div class='t' style='left:711.7px;width:1200px;text-align:right;top:1377.7px;font-size:28px;line-height:28px;color:#000;letter-spacing:0.22px;-webkit-text-stroke:0.3px #000;'>2 932 330</div>
<div class='t' style='left:943.7px;width:1200px;text-align:right;top:1377.7px;font-size:28px;line-height:28px;color:#000;letter-spacing:0.22px;-webkit-text-stroke:0.3px #000;'>5 600 990</div>
<div class='t' style='left:61.0px;top:1419.7px;font-size:28px;line-height:28px;color:#000;letter-spacing:0.952px;-webkit-text-stroke:0.3px #000;'>Кроссовки теннисные, размер 41 (мужские)</div>
<div class='t' style='left:511.7px;width:1200px;text-align:right;top:1419.7px;font-size:28px;line-height:28px;color:#000;letter-spacing:0.22px;-webkit-text-stroke:0.3px #000;'>4 418 470</div>
<div class='t' style='left:711.7px;width:1200px;text-align:right;top:1419.7px;font-size:28px;line-height:28px;color:#000;letter-spacing:0.22px;-webkit-text-stroke:0.3px #000;'>4 857 920</div>
<div class='t' style='left:943.7px;width:1200px;text-align:right;top:1419.7px;font-size:28px;line-height:28px;color:#000;letter-spacing:0.22px;-webkit-text-stroke:0.3px #000;'>9 276 390</div>
<div class='t' style='left:61.0px;top:1461.7px;font-size:28px;line-height:28px;color:#000;letter-spacing:0.952px;-webkit-text-stroke:0.3px #000;'>Кроссовки теннисные, размер 42 (мужские)</div>
<div class='t' style='left:511.7px;width:1200px;text-align:right;top:1461.7px;font-size:28px;line-height:28px;color:#000;letter-spacing:0.22px;-webkit-text-stroke:0.3px #000;'>982 770</div>
<div class='t' style='left:711.7px;width:1200px;text-align:right;top:1461.7px;font-size:28px;line-height:28px;color:#000;letter-spacing:0.22px;-webkit-text-stroke:0.3px #000;'>1 078 650</div>
<div class='t' style='left:943.7px;width:1200px;text-align:right;top:1461.7px;font-size:28px;line-height:28px;color:#000;letter-spacing:0.22px;-webkit-text-stroke:0.3px #000;'>2 061 420</div>
<div class='t' style='left:61.0px;top:1503.7px;font-size:28px;line-height:28px;color:#000;letter-spacing:0.952px;-webkit-text-stroke:0.3px #000;'>Кроссовки теннисные, размер 43 (мужские)</div>
<div class='t' style='left:-250.3px;width:1200px;text-align:right;top:1503.7px;font-size:28px;line-height:28px;color:#000;-webkit-text-stroke:0.3px #000;'>543</div>
<div class='t' style='left:8.7px;width:1200px;text-align:right;top:1503.7px;font-size:28px;line-height:28px;color:#000;-webkit-text-stroke:0.3px #000;'>597</div>
<div class='t' style='left:259.7px;width:1200px;text-align:right;top:1503.7px;font-size:28px;line-height:28px;color:#000;-webkit-text-stroke:0.3px #000;'>7 990</div>
<div class='t' style='left:511.7px;width:1200px;text-align:right;top:1503.7px;font-size:28px;line-height:28px;color:#000;letter-spacing:0.22px;-webkit-text-stroke:0.3px #000;'>4 338 570</div>
<div class='t' style='left:711.7px;width:1200px;text-align:right;top:1503.7px;font-size:28px;line-height:28px;color:#000;letter-spacing:0.22px;-webkit-text-stroke:0.3px #000;'>4 770 030</div>
<div class='t' style='left:943.7px;width:1200px;text-align:right;top:1503.7px;font-size:28px;line-height:28px;color:#000;letter-spacing:0.22px;-webkit-text-stroke:0.3px #000;'>9 108 600</div>
<div class='t' style='left:61.0px;top:1545.7px;font-size:28px;line-height:28px;color:#000;letter-spacing:0.952px;-webkit-text-stroke:0.3px #000;'>Кроссовки теннисные, размер 44 (мужские)</div>
<div class='t' style='left:-250.3px;width:1200px;text-align:right;top:1545.7px;font-size:28px;line-height:28px;color:#000;-webkit-text-stroke:0.3px #000;'>223</div>
<div class='t' style='left:8.7px;width:1200px;text-align:right;top:1545.7px;font-size:28px;line-height:28px;color:#000;-webkit-text-stroke:0.3px #000;'>245</div>
<div class='t' style='left:259.7px;width:1200px;text-align:right;top:1545.7px;font-size:28px;line-height:28px;color:#000;-webkit-text-stroke:0.3px #000;'>7 990</div>
<div class='t' style='left:511.7px;width:1200px;text-align:right;top:1545.7px;font-size:28px;line-height:28px;color:#000;letter-spacing:0.22px;-webkit-text-stroke:0.3px #000;'>1 781 770</div>
<div class='t' style='left:711.7px;width:1200px;text-align:right;top:1545.7px;font-size:28px;line-height:28px;color:#000;letter-spacing:0.22px;-webkit-text-stroke:0.3px #000;'>1 957 550</div>
<div class='t' style='left:943.7px;width:1200px;text-align:right;top:1545.7px;font-size:28px;line-height:28px;color:#000;letter-spacing:0.22px;-webkit-text-stroke:0.3px #000;'>3 739 320</div>
<div class='t' style='left:61.0px;top:1587.7px;font-size:28px;line-height:28px;color:#000;letter-spacing:0.952px;-webkit-text-stroke:0.3px #000;'>Кроссовки теннисные, размер 45 (мужские)</div>
<div class='t' style='left:-250.3px;width:1200px;text-align:right;top:1587.7px;font-size:28px;line-height:28px;color:#000;-webkit-text-stroke:0.3px #000;'>443</div>
<div class='t' style='left:8.7px;width:1200px;text-align:right;top:1587.7px;font-size:28px;line-height:28px;color:#000;-webkit-text-stroke:0.3px #000;'>487</div>
<div class='t' style='left:259.7px;width:1200px;text-align:right;top:1587.7px;font-size:28px;line-height:28px;color:#000;-webkit-text-stroke:0.3px #000;'>7 990</div>
<div class='t' style='left:511.7px;width:1200px;text-align:right;top:1587.7px;font-size:28px;line-height:28px;color:#000;letter-spacing:0.22px;-webkit-text-stroke:0.3px #000;'>3 539 570</div>
<div class='t' style='left:711.7px;width:1200px;text-align:right;top:1587.7px;font-size:28px;line-height:28px;color:#000;letter-spacing:0.22px;-webkit-text-stroke:0.3px #000;'>3 891 130</div>
<div class='t' style='left:943.7px;width:1200px;text-align:right;top:1587.7px;font-size:28px;line-height:28px;color:#000;letter-spacing:0.22px;-webkit-text-stroke:0.3px #000;'>7 430 700</div>
<svg style='left:1719px;top:698px' width='13' height='13' viewBox='0 0 13 13'><path d='M0 0 H12 L0 12 Z' fill='#169c2c'/></svg>
<svg style='left:1919px;top:698px' width='13' height='13' viewBox='0 0 13 13'><path d='M0 0 H12 L0 12 Z' fill='#169c2c'/></svg>
<div class='b' style='left:678px;top:568px;width:279px;height:48px;border:4px solid #217346;'></div>
<div class='b' style='left:53px;top:570px;width:4px;height:42px;background:#217346;'></div>
<div class='b' style='left:10px;top:1618px;width:2413px;height:53px;background:linear-gradient(#f2f2f2,#eeeeee);border-top:1.5px solid #d0d0d0;'></div>
<svg style='left:40px;top:1635.5px' width='62' height='20' viewBox='0 0 62 20'><path d='M13 0 V19 L0 9.5 Z' fill='#8d8d8d'/><path d='M46 0 V19 L60 9.5 Z' fill='#8d8d8d'/></svg>
<div class='b' style='left:132px;top:1617px;width:226px;height:46px;background:#fff;border-radius:0 0 5px 5px;box-shadow:0 1.5px 2px rgba(0,0,0,0.35);'></div>
<div class='t' style='left:167.7px;top:1628.4px;font-size:22px;line-height:22px;color:#217346;font-weight:700;letter-spacing:0.936px;'>microexcel.ru</div>
<svg style='left:387px;top:1633px' width='21' height='21' viewBox='0 0 21 21'><path d='M0 10.5 H21 M10.5 0 V21' stroke='#555' stroke-width='3.4'/></svg>
<div class='b' style='left:434px;top:1621px;width:2px;height:40px;background:#dcdcdc;'></div>
<div class='b' style='left:10px;top:1670px;width:2413px;height:2px;background:#9c9c9c;'></div>
<div class='b' style='left:10px;top:1672px;width:2413px;height:45px;background:linear-gradient(#e6e6e6,#d6d6d6);'></div>
<div class='t' style='left:60.0px;top:1683.5px;font-size:23px;line-height:23px;color:#4a4a4a;letter-spacing:0.994px;'>Готово</div>
<div class='b' style='left:1780px;top:1672px;width:74px;height:45px;background:#a3a3a3;'></div>
<svg style='left:1800px;top:1676px' width='180' height='34' viewBox='1800 1676 180 34'>
<rect x='1804.1' y='1680' width='25.8' height='25.9' rx='2' fill='#fff'/>
<g fill='#a4a4a4'>
<rect x='1806.2' y='1682.1' width='5.9' height='5.9'/><rect x='1814.2' y='1682.1' width='5.9' height='5.9'/><rect x='1822.1' y='1682.1' width='5.9' height='5.9'/>
<rect x='1806.2' y='1690.1' width='5.9' height='5.9'/><rect x='1814.2' y='1690.1' width='5.9' height='5.9'/><rect x='1822.1' y='1690.1' width='5.9' height='5.9'/>
<rect x='1806.2' y='1698.1' width='5.9' height='5.9'/><rect x='1814.2' y='1698.1' width='5.9' height='5.9'/><rect x='1822.1' y='1698.1' width='5.9' height='5.9'/>
</g>
<rect x='1876.2' y='1681.2' width='25.4' height='23.3' rx='1.5' fill='none' stroke='#5c5c5c' stroke-width='2'/>
<rect x='1882' y='1685.1' width='13.8' height='15.6' fill='none' stroke='#5c5c5c' stroke-width='1.8'/>
<path d='M1885.2 1689 H1893 M1885.2 1692.9 H1893 M1885.2 1696.8 H1893' stroke='#5c5c5c' stroke-width='1.6'/>
<rect x='1947.5' y='1681.2' width='25' height='23.3' rx='1.5' fill='none' stroke='#5c5c5c' stroke-width='2'/>
<path d='M1954.8 1681 V1695.2 M1963.5 1681 V1695.2 M1947 1695.2 H1964.4' fill='none' stroke='#5c5c5c' stroke-width='1.8'/>
</svg>
<div class='b' style='left:2012px;top:1692px;width:16px;height:4px;background:#6b6b6b;'></div>
<div class='b' style='left:2045px;top:1690px;width:195px;height:8px;background:#9e9e9e;border-radius:4px;'></div>
<div class='b' style='left:2131px;top:1682px;width:22px;height:22px;border-radius:50%;background:#fff;border:1px solid #b9b9b9;box-shadow:0 1px 1.5px rgba(0,0,0,.3);'></div>
<svg style='left:2256px;top:1686px' width='16' height='16' viewBox='0 0 16 16'><path d='M0 8 H16 M8 0 V16' stroke='#6b6b6b' stroke-width='3.4'/></svg>
<div class='t' style='left:2306.0px;top:1682.7px;font-size:24px;line-height:24px;color:#555;letter-spacing:0.3px;'>100 %</div>
</div>
<div class='b' style='left:802px;top:580px;width:742px;height:943.5px;background:linear-gradient(#e9e9eb,#eeeef0);border-radius:10px;box-shadow:0 0 0 0.8px rgba(0,0,0,0.18),0 10px 26px rgba(0,0,0,0.28);'></div>
<div class='b' style='left:802px;top:750.5px;width:742px;height:3.0px;background:#d9d9db;'></div>
<div class='b' style='left:802px;top:850.0px;width:742px;height:3.0px;background:#d9d9db;'></div>
<div class='b' style='left:802px;top:910.9px;width:742px;height:3.0px;background:#d9d9db;'></div>
<div class='b' style='left:802px;top:926px;width:742px;height:37.60000000000002px;background:#4590fa;'></div>
<div class='b' style='left:802px;top:1088.5px;width:742px;height:3.0px;background:#d9d9db;'></div>
<div class='b' style='left:802px;top:1226.5px;width:742px;height:3.0px;background:#d9d9db;'></div>
<div class='b' style='left:802px;top:1288.5px;width:742px;height:3.0px;background:#d9d9db;'></div>
<div class='b' style='left:802px;top:1426.5px;width:742px;height:3.0px;background:#d9d9db;'></div>
<div class='t' style='left:844.5px;top:592.5px;font-size:27px;line-height:27px;color:#303030;letter-spacing:1.06px;-webkit-text-stroke:0.25px #303030;'>Вырезать</div>
<div class='t' style='left:325.5px;width:1200px;text-align:right;top:592.4px;font-size:28px;line-height:28px;color:#303030;letter-spacing:1.6px;-webkit-text-stroke:0.45px #303030;'>⌘X</div>
<div class='t' style='left:844.5px;top:630.8px;font-size:27px;line-height:27px;color:#303030;letter-spacing:1.403px;-webkit-text-stroke:0.25px #303030;'>Копировать</div>
<div class='t' style='left:325.5px;width:1200px;text-align:right;top:630.7px;font-size:28px;line-height:28px;color:#303030;letter-spacing:1.6px;-webkit-text-stroke:0.45px #303030;'>⌘C</div>
<div class='t' style='left:844.5px;top:668.8px;font-size:27px;line-height:27px;color:#b2b2b2;letter-spacing:0.938px;-webkit-text-stroke:0.25px #b2b2b2;'>Вставить</div>
<div class='t' style='left:325.5px;width:1200px;text-align:right;top:668.7px;font-size:28px;line-height:28px;color:#b2b2b2;letter-spacing:1.6px;-webkit-text-stroke:0.45px #b2b2b2;'>⌘V</div>
<div class='t' style='left:844.5px;top:706.3px;font-size:27px;line-height:27px;color:#b2b2b2;letter-spacing:0.788px;-webkit-text-stroke:0.25px #b2b2b2;'>Специальная вставка...</div>
<div class='t' style='left:325.5px;width:1200px;text-align:right;top:706.2px;font-size:28px;line-height:28px;color:#b2b2b2;letter-spacing:1.6px;-webkit-text-stroke:0.45px #b2b2b2;'>^⌘V</div>
<div class='t' style='left:844.5px;top:768.8px;font-size:27px;line-height:27px;color:#303030;letter-spacing:1.032px;-webkit-text-stroke:0.25px #303030;'>Интеллектуальный поиск...</div>
<div class='t' style='left:325.5px;width:1200px;text-align:right;top:768.7px;font-size:28px;line-height:28px;color:#303030;letter-spacing:1.6px;-webkit-text-stroke:0.45px #303030;'>^⌥⌘L</div>
<div class='t' style='left:844.5px;top:806.8px;font-size:27px;line-height:27px;color:#303030;letter-spacing:1.188px;-webkit-text-stroke:0.25px #303030;'>Тезаурус...</div>
<div class='t' style='left:325.5px;width:1200px;text-align:right;top:806.7px;font-size:28px;line-height:28px;color:#303030;letter-spacing:1.6px;-webkit-text-stroke:0.45px #303030;'>^⌥⌘R</div>
<div class='t' style='left:844.5px;top:868.8px;font-size:27px;line-height:27px;color:#b2b2b2;letter-spacing:1.109px;-webkit-text-stroke:0.25px #b2b2b2;'>Обновить</div>
<div class='t' style='left:844.5px;top:931.8px;font-size:27px;line-height:27px;color:#fff;letter-spacing:0.938px;-webkit-text-stroke:0.25px #fff;'>Вставить</div>
<svg style='left:1501px;top:936px' width='20' height='19' viewBox='0 0 20 19'><path d='M0 0 L20 9.5 L0 19 Z' fill='#fff'/></svg>
<div class='t' style='left:844.5px;top:970.8px;font-size:27px;line-height:27px;color:#303030;letter-spacing:0.823px;-webkit-text-stroke:0.25px #303030;'>Удалить</div>
<svg style='left:1501px;top:975px' width='20' height='19' viewBox='0 0 20 19'><path d='M0 0 L20 9.5 L0 19 Z' fill='#303030'/></svg>
<div class='t' style='left:844.5px;top:1007.5px;font-size:27px;line-height:27px;color:#303030;letter-spacing:0.875px;-webkit-text-stroke:0.25px #303030;'>Выбрать</div>
<svg style='left:1501px;top:1011.7px' width='20' height='19' viewBox='0 0 20 19'><path d='M0 0 L20 9.5 L0 19 Z' fill='#303030'/></svg>
<div class='t' style='left:844.5px;top:1044.8px;font-size:27px;line-height:27px;color:#303030;letter-spacing:1.431px;-webkit-text-stroke:0.25px #303030;'>Очистить содержимое</div>
<div class='t' style='left:844.5px;top:1107.3px;font-size:27px;line-height:27px;color:#303030;letter-spacing:1.314px;-webkit-text-stroke:0.25px #303030;'>Сортировка</div>
<svg style='left:1501px;top:1111.5px' width='20' height='19' viewBox='0 0 20 19'><path d='M0 0 L20 9.5 L0 19 Z' fill='#303030'/></svg>
<div class='t' style='left:844.5px;top:1144.4px;font-size:27px;line-height:27px;color:#303030;letter-spacing:1.363px;-webkit-text-stroke:0.25px #303030;'>Фильтр</div>
<svg style='left:1501px;top:1148.6px' width='20' height='19' viewBox='0 0 20 19'><path d='M0 0 L20 9.5 L0 19 Z' fill='#303030'/></svg>
<div class='t' style='left:844.5px;top:1183.8px;font-size:27px;line-height:27px;color:#303030;letter-spacing:0.857px;-webkit-text-stroke:0.25px #303030;'>Таблица</div>
<svg style='left:1501px;top:1188px' width='20' height='19' viewBox='0 0 20 19'><path d='M0 0 L20 9.5 L0 19 Z' fill='#303030'/></svg>
<div class='t' style='left:844.5px;top:1245.8px;font-size:27px;line-height:27px;color:#303030;letter-spacing:1.177px;-webkit-text-stroke:0.25px #303030;'>Вставить примечание</div>
<div class='t' style='left:844.5px;top:1307.8px;font-size:27px;line-height:27px;color:#303030;letter-spacing:1.212px;-webkit-text-stroke:0.25px #303030;'>Формат ячеек...</div>
<div class='t' style='left:325.5px;width:1200px;text-align:right;top:1307.7px;font-size:28px;line-height:28px;color:#303030;letter-spacing:1.6px;-webkit-text-stroke:0.45px #303030;'>⌘1</div>
<div class='t' style='left:844.5px;top:1345.3px;font-size:27px;line-height:27px;color:#303030;letter-spacing:1.179px;-webkit-text-stroke:0.25px #303030;'>Выбрать из раскрывающегося списка...</div>
<div class='t' style='left:844.5px;top:1383.8px;font-size:27px;line-height:27px;color:#303030;letter-spacing:1.068px;-webkit-text-stroke:0.25px #303030;'>Гиперссылка...</div>
<div class='t' style='left:325.5px;width:1200px;text-align:right;top:1383.7px;font-size:28px;line-height:28px;color:#303030;letter-spacing:1.6px;-webkit-text-stroke:0.45px #303030;'>⌘K</div>
<div class='t' style='left:844.5px;top:1445.8px;font-size:27px;line-height:27px;color:#303030;letter-spacing:1.245px;-webkit-text-stroke:0.25px #303030;'>Сохранить снимок выбранной области экрана</div>
<div class='t' style='left:844.5px;top:1482.8px;font-size:27px;line-height:27px;color:#303030;letter-spacing:1.432px;-webkit-text-stroke:0.25px #303030;'>Импортировать изображение</div>
<div class='b' style='left:1544px;top:918px;width:406px;height:90px;background:#eaeaec;border-radius:0 8px 8px 8px;box-shadow:0 0 0 0.8px rgba(0,0,0,0.18),0 8px 20px rgba(0,0,0,0.25);'></div>
<div class='t' style='left:1587.0px;top:930.8px;font-size:27px;line-height:27px;color:#303030;letter-spacing:0.813px;'>Столбцы таблицы слева</div>
<div class='b' style='left:1544px;top:964px;width:404px;height:37px;background:#4590fa;'></div>
<div class='t' style='left:1587.0px;top:968.8px;font-size:27px;line-height:27px;color:#fff;letter-spacing:1.026px;'>Строки таблицы выше</div>
<div class='b' style='left:807px;top:915.5px;width:731px;height:59px;border:5px solid #fe0000;border-radius:13px;'></div>
<div class='b' style='left:1537px;top:956px;width:414.5px;height:55px;border:6px solid #fe0000;border-radius:13px;'></div>
<svg style='left:565px;top:560px' width='185' height='65' viewBox='565 560 185 65'>
<path d='M574 586.5 L691 586.5 Q697 586.5 694.5 581 Q687 571 688.5 568 Q690.5 565 697 569.5 Q716 584 738.5 590.5 Q745 592.5 738.5 595 Q716 601 697 614.5 Q690.5 619 688.5 616 Q687 613 694.5 604 Q697 598.5 691 598.5 L574 598.5 Q568.5 598.5 568.5 592.5 Q568.5 586.5 574 586.5 Z' fill='none' stroke='#ff0000' stroke-width='5' stroke-linejoin='round'/></svg>
</body></html>
